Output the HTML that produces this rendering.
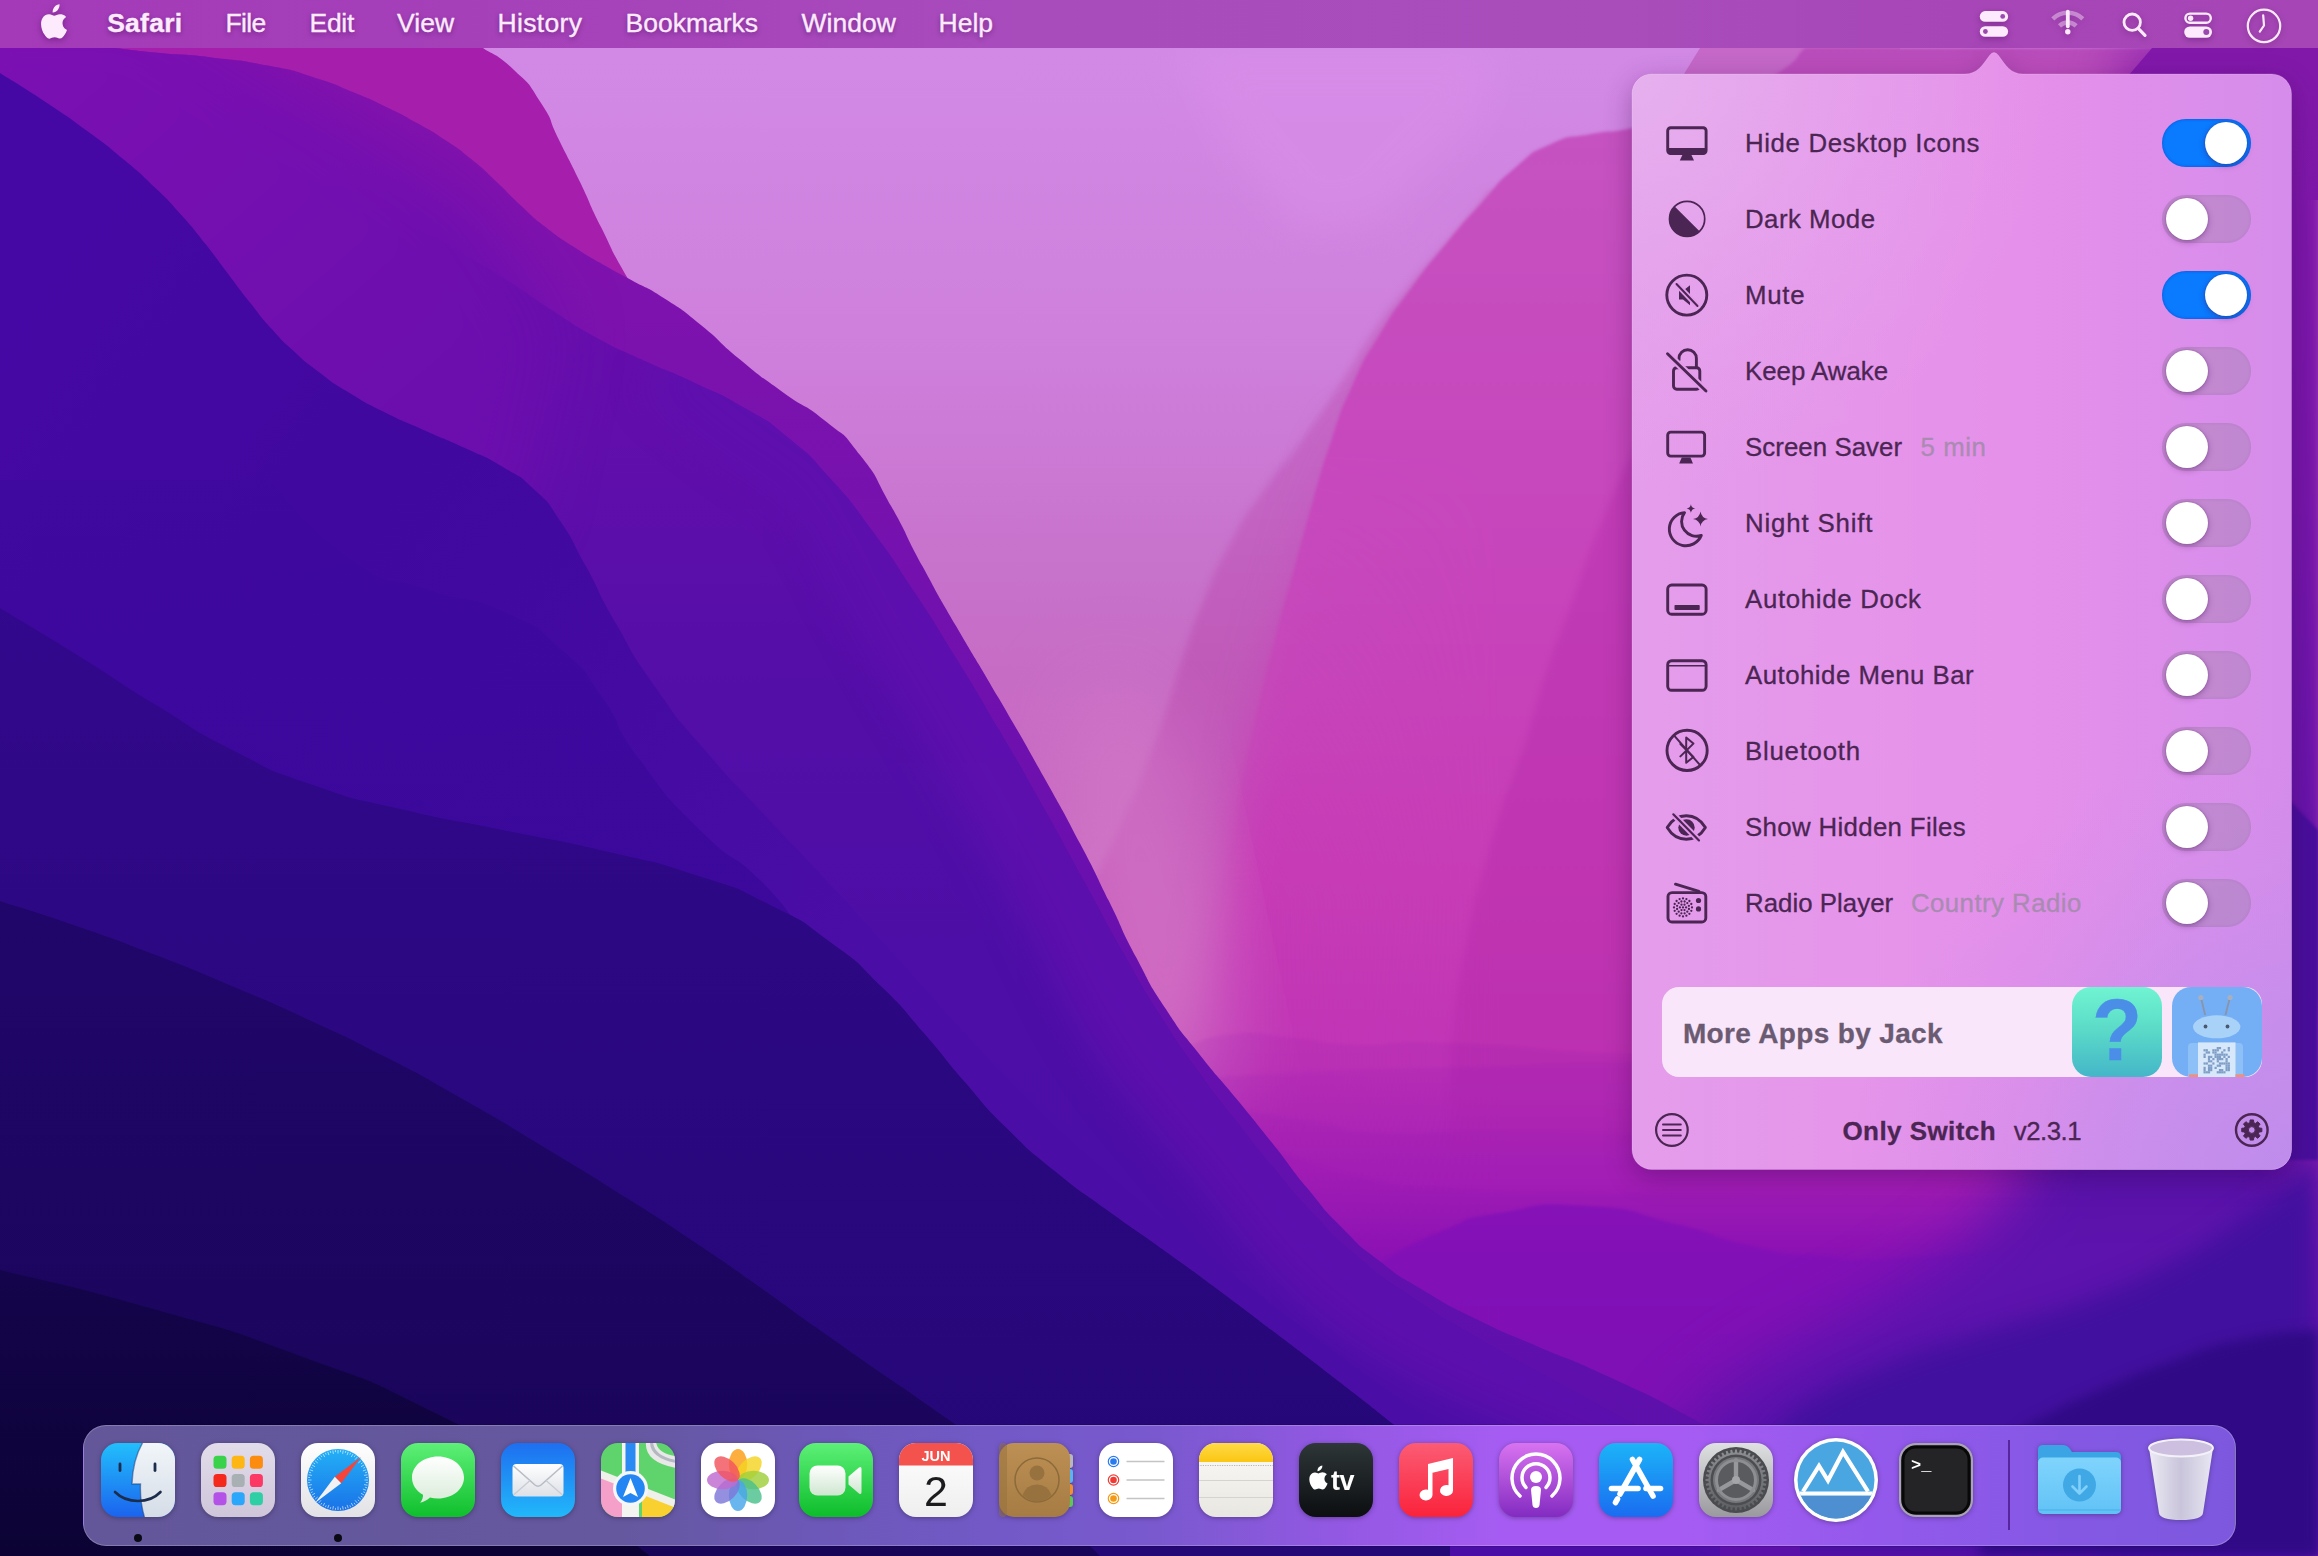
<!DOCTYPE html>
<html><head><meta charset="utf-8"><title>Desktop</title>
<style>
html,body{margin:0;padding:0;}
body{width:2318px;height:1556px;overflow:hidden;position:relative;background:#3a0a90;font-family:"Liberation Sans",sans-serif;}
</style></head><body>
<svg id="wp" width="2318" height="1556" viewBox="0 0 2318 1556" style="position:absolute;left:0;top:0">
<defs>
<linearGradient id="gSky" x1="0" y1="48" x2="0" y2="1300" gradientUnits="userSpaceOnUse"><stop offset="0" stop-color="#d289e6"/><stop offset="0.25" stop-color="#ce7fdb"/><stop offset="0.42" stop-color="#c772cb"/><stop offset="0.5" stop-color="#c76cc5"/><stop offset="0.6" stop-color="#c86ac2"/><stop offset="0.75" stop-color="#d070c4"/><stop offset="1" stop-color="#b030b4"/></linearGradient>
<linearGradient id="gPink" x1="0" y1="48" x2="0" y2="1556" gradientUnits="userSpaceOnUse"><stop offset="0" stop-color="#b84cba"/><stop offset="0.05" stop-color="#c552c0"/><stop offset="0.3" stop-color="#c746bc"/><stop offset="0.55" stop-color="#c73cb6"/><stop offset="0.68" stop-color="#c034b6"/><stop offset="0.755" stop-color="#ac22b8"/><stop offset="0.8" stop-color="#8e14b6"/><stop offset="0.85" stop-color="#7c10b2"/><stop offset="0.92" stop-color="#6a10aa"/><stop offset="1" stop-color="#560e9e"/></linearGradient>
<linearGradient id="gHaze" x1="0" y1="190" x2="0" y2="1250" gradientUnits="userSpaceOnUse"><stop offset="0" stop-color="#c970cc"/><stop offset="0.25" stop-color="#c466c5"/><stop offset="0.45" stop-color="#c05ab9"/><stop offset="0.6" stop-color="#c458ba"/><stop offset="0.75" stop-color="#ca58bc"/><stop offset="1" stop-color="#b030b4" stop-opacity="0"/></linearGradient>
<linearGradient id="gC" x1="0" y1="48" x2="0" y2="1556" gradientUnits="userSpaceOnUse"><stop offset="0" stop-color="#8412ac"/><stop offset="0.2" stop-color="#7c12ae"/><stop offset="0.5" stop-color="#6c10ae"/><stop offset="0.75" stop-color="#6210ae"/><stop offset="1" stop-color="#5c10aa"/></linearGradient>
<linearGradient id="gC2" x1="0" y1="48" x2="350" y2="450" gradientUnits="userSpaceOnUse"><stop offset="0" stop-color="#7b10b2"/><stop offset="0.5" stop-color="#740fb0"/><stop offset="1" stop-color="#6c0eae"/></linearGradient>
<linearGradient id="gD" x1="0" y1="150" x2="0" y2="1500" gradientUnits="userSpaceOnUse"><stop offset="0" stop-color="#6e0eae"/><stop offset="0.2" stop-color="#620eac"/><stop offset="0.4" stop-color="#540ea8"/><stop offset="0.6" stop-color="#4c0ea6"/><stop offset="1" stop-color="#4a0ea6"/></linearGradient>
<linearGradient id="gE" x1="0" y1="300" x2="1300" y2="1300" gradientUnits="userSpaceOnUse"><stop offset="0" stop-color="#4608a4"/><stop offset="0.25" stop-color="#40089f"/><stop offset="0.45" stop-color="#440aa1"/><stop offset="0.65" stop-color="#4a0ea6"/><stop offset="1" stop-color="#4a0ea6"/></linearGradient>
<linearGradient id="gE2" x1="0" y1="480" x2="0" y2="1000" gradientUnits="userSpaceOnUse"><stop offset="0" stop-color="#3e089e"/><stop offset="1" stop-color="#38089a"/></linearGradient>
<linearGradient id="gF" x1="0" y1="600" x2="0" y2="1556" gradientUnits="userSpaceOnUse"><stop offset="0" stop-color="#32088c"/><stop offset="0.5" stop-color="#2a0880"/><stop offset="1" stop-color="#250776"/></linearGradient>
<linearGradient id="gG" x1="0" y1="900" x2="0" y2="1556" gradientUnits="userSpaceOnUse"><stop offset="0" stop-color="#20066a"/><stop offset="1" stop-color="#190558"/></linearGradient>
<linearGradient id="gH" x1="0" y1="1270" x2="0" y2="1556" gradientUnits="userSpaceOnUse"><stop offset="0" stop-color="#14044c"/><stop offset="1" stop-color="#0c0334"/></linearGradient>
<linearGradient id="gR" x1="0" y1="48" x2="0" y2="1556" gradientUnits="userSpaceOnUse"><stop offset="0" stop-color="#8218aa"/><stop offset="0.3" stop-color="#7616aa"/><stop offset="0.5" stop-color="#6814aa"/><stop offset="0.55" stop-color="#5a12a6"/><stop offset="0.72" stop-color="#5411a6"/><stop offset="0.8" stop-color="#5e13ae"/><stop offset="0.9" stop-color="#5a12ac"/><stop offset="1" stop-color="#5210a4"/></linearGradient>
<filter color-interpolation-filters="sRGB" id="b2" x="-5%" y="-5%" width="110%" height="110%"><feGaussianBlur color-interpolation-filters="sRGB" stdDeviation="1.500"/></filter>
<filter color-interpolation-filters="sRGB" id="b4" x="-10%" y="-10%" width="120%" height="120%"><feGaussianBlur color-interpolation-filters="sRGB" stdDeviation="3.500"/></filter>
<filter color-interpolation-filters="sRGB" id="b6" x="-10%" y="-10%" width="120%" height="120%"><feGaussianBlur color-interpolation-filters="sRGB" stdDeviation="6"/></filter>
<filter color-interpolation-filters="sRGB" id="b12" x="-10%" y="-10%" width="120%" height="120%"><feGaussianBlur color-interpolation-filters="sRGB" stdDeviation="12"/></filter>
<filter color-interpolation-filters="sRGB" id="b20" x="-20%" y="-20%" width="140%" height="140%"><feGaussianBlur color-interpolation-filters="sRGB" stdDeviation="20"/></filter>
<filter color-interpolation-filters="sRGB" id="b30" x="-30%" y="-30%" width="160%" height="160%"><feGaussianBlur color-interpolation-filters="sRGB" stdDeviation="30"/></filter>
<filter color-interpolation-filters="sRGB" id="b40" x="-30%" y="-30%" width="160%" height="160%"><feGaussianBlur color-interpolation-filters="sRGB" stdDeviation="40"/></filter>
<linearGradient id="mPg" x1="0" y1="450" x2="0" y2="900" gradientUnits="userSpaceOnUse"><stop offset="0" stop-color="#fff"/><stop offset="1" stop-color="#000"/></linearGradient>
<linearGradient id="mPh" x1="1250" y1="0" x2="1500" y2="0" gradientUnits="userSpaceOnUse"><stop offset="0" stop-color="#fff" stop-opacity="0"/><stop offset="1" stop-color="#fff" stop-opacity="1"/></linearGradient>
<linearGradient id="mPbg" x1="0" y1="380" x2="0" y2="800" gradientUnits="userSpaceOnUse"><stop offset="0" stop-color="#000"/><stop offset="1" stop-color="#fff"/></linearGradient>
<mask id="mPb" maskUnits="userSpaceOnUse" x="0" y="0" width="2318" height="1556"><rect x="0" y="0" width="2318" height="1556" fill="url(#mPbg)"/></mask>
<mask id="mP" maskUnits="userSpaceOnUse" x="0" y="0" width="2318" height="1556"><rect x="0" y="0" width="2318" height="1556" fill="url(#mPg)"/><rect x="1250" y="0" width="1070" height="1556" fill="url(#mPh)"/></mask>
</defs>
<rect x="0" y="0" width="2318" height="1556" fill="url(#gSky)"/>
<path d="M1180,48 L1500,48 L1480,120 L1380,220 L1300,230 L1230,150 Z" fill="#da90ea" opacity="0.55" filter="url(#b20)"/>
<path d="M1700,48 L1684,74 L1650,130 L1900,130 L1900,48 Z" fill="#c568c8"/>
<path d="M1490.0,190.0 C1483.3,198.3 1486.2,195.4 1470.0,215.0 C1453.8,234.6 1462.1,224.6 1441.2,248.8 C1420.4,272.9 1430.0,260.0 1407.5,287.5 C1385.0,315.0 1395.8,299.6 1373.8,331.2 C1351.7,362.9 1364.6,347.1 1341.2,382.5 C1317.9,417.9 1329.6,401.7 1303.8,437.5 C1277.9,473.3 1288.3,454.6 1263.8,490.0 C1239.2,525.4 1250.0,507.1 1230.0,543.8 C1210.0,580.4 1218.8,564.2 1203.8,600.0 C1188.8,635.8 1196.7,617.1 1185.0,651.2 C1173.3,685.4 1180.8,666.2 1168.8,702.5 C1156.7,738.8 1163.8,720.8 1148.8,760.0 C1133.8,799.2 1142.1,780.0 1123.8,820.0 C1105.4,860.0 1115.0,840.0 1093.8,880.0 C1072.5,920.0 1071.2,920.0 1060.0,940.0 L1060.0,1556.0 L2318.0,1556.0 L2318.0,190.0 Z" fill="url(#gHaze)" filter="url(#b4)"/>
<g mask="url(#mPb)"><path d="M1805.0,48.0 C1793.8,57.7 1804.4,57.3 1771.2,77.0 C1738.1,96.7 1749.8,90.5 1705.5,107.0 C1661.2,123.5 1676.7,117.5 1638.5,126.5 C1600.3,135.5 1620.0,128.2 1591.0,134.0 C1562.0,139.8 1577.0,132.3 1551.5,143.8 C1526.0,155.2 1538.1,148.2 1514.5,168.2 C1490.9,188.2 1503.2,178.9 1480.8,203.8 C1458.2,228.6 1469.9,215.0 1447.0,242.8 C1424.1,270.5 1434.5,256.3 1412.0,287.0 C1389.5,317.7 1399.1,302.6 1379.5,334.8 C1359.9,366.9 1369.1,348.9 1353.2,383.5 C1337.4,418.1 1345.4,399.3 1332.0,438.5 C1318.6,477.7 1325.3,458.4 1313.0,501.0 C1300.7,543.6 1306.9,523.1 1295.0,566.2 C1283.1,609.4 1288.6,587.3 1277.2,630.5 C1265.9,673.7 1271.0,652.1 1261.0,695.8 C1251.0,739.4 1255.9,717.8 1247.2,761.5 C1238.6,805.2 1243.7,780.6 1235.0,826.8 C1226.3,872.9 1231.5,848.9 1221.2,900.0 C1211.0,951.1 1216.3,926.7 1204.2,980.0 C1192.2,1033.3 1191.4,1033.3 1185.0,1060.0 L1185.0,1556.0 L2318.0,1556.0 L2318.0,48.0 Z" fill="url(#gPink)" filter="url(#b20)"/></g>
<g mask="url(#mP)"><path d="M1805.0,48.0 C1793.8,57.7 1804.4,57.3 1771.2,77.0 C1738.1,96.7 1749.8,90.5 1705.5,107.0 C1661.2,123.5 1676.7,117.5 1638.5,126.5 C1600.3,135.5 1620.0,128.2 1591.0,134.0 C1562.0,139.8 1577.0,132.3 1551.5,143.8 C1526.0,155.2 1538.1,148.2 1514.5,168.2 C1490.9,188.2 1503.2,178.9 1480.8,203.8 C1458.2,228.6 1469.9,215.0 1447.0,242.8 C1424.1,270.5 1434.5,256.3 1412.0,287.0 C1389.5,317.7 1399.1,302.6 1379.5,334.8 C1359.9,366.9 1369.1,348.9 1353.2,383.5 C1337.4,418.1 1345.4,399.3 1332.0,438.5 C1318.6,477.7 1325.3,458.4 1313.0,501.0 C1300.7,543.6 1306.9,523.1 1295.0,566.2 C1283.1,609.4 1288.6,587.3 1277.2,630.5 C1265.9,673.7 1271.0,652.1 1261.0,695.8 C1251.0,739.4 1255.9,717.8 1247.2,761.5 C1238.6,805.2 1243.7,780.6 1235.0,826.8 C1226.3,872.9 1231.5,848.9 1221.2,900.0 C1211.0,951.1 1216.3,926.7 1204.2,980.0 C1192.2,1033.3 1191.4,1033.3 1185.0,1060.0 L1185.0,1556.0 L2318.0,1556.0 L2318.0,48.0 Z" fill="url(#gPink)" filter="url(#b2)"/></g>
<path d="M1660.0,400.0 C1643.3,434.0 1640.0,433.0 1610.0,502.0 C1580.0,571.0 1591.0,551.0 1570.0,607.0 C1549.0,663.0 1560.7,629.3 1547.0,670.0 C1533.3,710.7 1548.3,669.0 1529.0,729.0 C1509.7,789.0 1510.3,776.3 1489.0,850.0 C1467.7,923.7 1478.0,883.3 1465.0,950.0 C1452.0,1016.7 1455.0,1016.7 1450.0,1050.0 L1450.0,1150.0 L1700.0,1150.0 L1700.0,400.0 Z" fill="#b428aa" opacity="0.35" filter="url(#b4)"/>
<ellipse cx="1150" cy="900" rx="70" ry="230" fill="#d47cc8" opacity="0.55" filter="url(#b40)" transform="rotate(-12 1150 900)"/>
<path d="M1185.0,1048.0 C1201.3,1043.3 1198.3,1037.3 1234.0,1034.0 C1269.7,1030.7 1250.0,1034.3 1292.0,1038.0 C1334.0,1041.7 1307.3,1043.3 1360.0,1045.0 C1412.7,1046.7 1356.7,1040.0 1450.0,1043.0 C1543.3,1046.0 1523.3,1051.7 1640.0,1054.0 C1756.7,1056.3 1646.7,1048.0 1800.0,1050.0 C1953.3,1052.0 2000.0,1056.7 2100.0,1060.0 L2100.0,1556.0 L1185.0,1556.0 Z" fill="#8a12b4" opacity="0.10" filter="url(#b2)"/>
<path d="M1205.0,1078.0 C1241.7,1076.0 1233.3,1075.3 1315.0,1072.0 C1396.7,1068.7 1341.7,1071.3 1450.0,1068.0 C1558.3,1064.7 1523.3,1061.3 1640.0,1062.0 C1756.7,1062.7 1646.7,1064.0 1800.0,1070.0 C1953.3,1076.0 2000.0,1076.7 2100.0,1080.0 L2100.0,1556.0 L1205.0,1556.0 Z" fill="#8a12b4" opacity="0.10" filter="url(#b2)"/>
<path d="M1240.0,1110.0 C1265.0,1114.0 1267.7,1114.3 1315.0,1122.0 C1362.3,1129.7 1322.0,1130.0 1382.0,1133.0 C1442.0,1136.0 1409.0,1130.3 1495.0,1131.0 C1581.0,1131.7 1538.3,1132.0 1640.0,1135.0 C1741.7,1138.0 1646.7,1135.0 1800.0,1140.0 C1953.3,1145.0 2000.0,1146.7 2100.0,1150.0 L2100.0,1556.0 L1240.0,1556.0 Z" fill="#8a12b4" opacity="0.10" filter="url(#b2)"/>
<path d="M1275.0,1150.0 C1303.3,1158.7 1301.7,1163.0 1360.0,1176.0 C1418.3,1189.0 1356.7,1183.0 1450.0,1189.0 C1543.3,1195.0 1523.3,1191.7 1640.0,1194.0 C1756.7,1196.3 1646.7,1194.0 1800.0,1196.0 C1953.3,1198.0 2000.0,1198.7 2100.0,1200.0 L2100.0,1556.0 L1275.0,1556.0 Z" fill="#8a12b4" opacity="0.10" filter="url(#b2)"/>
<path d="M1380.0,1262.0 C1400.0,1252.0 1400.0,1248.3 1440.0,1232.0 C1480.0,1215.7 1450.7,1221.7 1500.0,1213.0 C1549.3,1204.3 1529.3,1202.3 1588.0,1206.0 C1646.7,1209.7 1623.0,1211.0 1676.0,1224.0 C1729.0,1237.0 1699.7,1234.3 1747.0,1245.0 C1794.3,1255.7 1767.0,1251.7 1818.0,1256.0 C1869.0,1260.3 1839.3,1260.0 1900.0,1258.0 C1960.7,1256.0 1966.7,1252.7 2000.0,1250.0 L2100.0,1556.0 L1380.0,1556.0 Z" fill="#8010b8" opacity="0.75" filter="url(#b2)"/>
<path d="M2152.0,48.0 C2144.3,56.7 2144.7,-10.0 2129.0,74.0 C2113.3,158.0 2123.0,91.3 2105.0,300.0 C2087.0,508.7 2098.3,433.3 2075.0,700.0 C2051.7,966.7 2052.7,943.0 2035.0,1100.0 C2017.3,1257.0 2033.3,1136.7 2022.0,1171.0 C2010.7,1205.3 2018.7,1180.7 2001.0,1203.0 C1983.3,1225.3 1995.0,1214.7 1969.0,1238.0 C1943.0,1261.3 1956.0,1250.7 1923.0,1273.0 C1890.0,1295.3 1905.0,1285.0 1870.0,1305.0 C1835.0,1325.0 1861.3,1308.0 1818.0,1333.0 C1774.7,1358.0 1786.0,1347.7 1740.0,1380.0 C1694.0,1412.3 1700.0,1413.3 1680.0,1430.0 L1680.0,1556.0 L2318.0,1556.0 L2318.0,48.0 Z" fill="url(#gR)" filter="url(#b30)"/>
<path d="M2200,48 L2200,1130 L2318,1000 L2318,48 Z" fill="url(#gR)" filter="url(#b6)"/>
<path d="M2152,48 L2128,76 L2122,200 L2318,200 L2318,48 Z" fill="url(#gR)"/>
<path d="M2318.0,1150.0 C2307.7,1161.7 2312.7,1161.7 2287.0,1185.0 C2261.3,1208.3 2280.0,1194.0 2241.0,1220.0 C2202.0,1246.0 2217.0,1238.0 2170.0,1263.0 C2123.0,1288.0 2147.0,1276.3 2100.0,1295.0 C2053.0,1313.7 2076.0,1304.0 2029.0,1319.0 C1982.0,1334.0 2006.0,1324.7 1959.0,1340.0 C1912.0,1355.3 1935.0,1346.0 1888.0,1365.0 C1841.0,1384.0 1853.3,1377.0 1818.0,1397.0 C1782.7,1417.0 1808.0,1400.7 1782.0,1425.0 C1756.0,1449.3 1754.0,1455.0 1740.0,1470.0 L1740.0,1556.0 L2318.0,1556.0 Z" fill="#42109e" filter="url(#b12)"/>
<path d="M2318.0,1330.0 C2292.3,1333.3 2290.3,1329.3 2241.0,1340.0 C2191.7,1350.7 2217.0,1345.3 2170.0,1362.0 C2123.0,1378.7 2141.0,1372.3 2100.0,1390.0 C2059.0,1407.7 2073.0,1401.7 2047.0,1415.0 C2021.0,1428.3 2044.3,1411.7 2022.0,1430.0 C1999.7,1448.3 1994.0,1456.7 1980.0,1470.0 L1980.0,1556.0 L2318.0,1556.0 Z" fill="#300a86" filter="url(#b6)"/>
<path d="M2280,790 L2318,830 L2318,1160 L2280,1160 Z" fill="#480e9c" filter="url(#b2)"/>
<path d="M483.0,48.0 C493.3,55.3 494.7,51.7 514.0,70.0 C533.3,88.3 526.0,79.7 541.0,103.0 C556.0,126.3 546.0,113.7 559.0,140.0 C572.0,166.3 566.0,153.0 580.0,182.0 C594.0,211.0 585.0,194.7 601.0,227.0 C617.0,259.3 608.3,244.7 628.0,279.0 C647.7,313.3 649.3,313.0 660.0,330.0 L660.0,500.0 L0.0,500.0 L0.0,48.0 Z" fill="#a51eac"/>
<clipPath id="clipC"><path d="M115.0,48.0 C129.0,49.6 124.9,49.6 157.0,52.8 C189.1,55.9 174.2,53.1 211.2,57.4 C248.2,61.7 233.2,58.8 268.0,65.6 C302.8,72.4 286.8,69.0 315.5,77.9 C344.2,86.9 330.2,82.7 354.0,92.5 C377.8,102.3 365.8,97.1 386.8,107.2 C407.8,117.4 397.4,112.0 417.0,123.0 C436.6,134.0 427.2,128.1 445.5,140.2 C463.8,152.4 454.7,145.6 471.8,159.5 C488.8,173.4 480.5,166.8 496.8,182.0 C513.0,197.2 504.2,190.2 520.5,205.2 C536.8,220.2 527.7,213.1 545.5,227.0 C563.3,240.9 555.0,234.6 574.0,247.0 C593.0,259.4 583.4,253.2 602.5,264.2 C621.6,275.2 610.6,268.6 631.2,280.0 C651.9,291.4 641.2,283.4 664.5,298.5 C687.8,313.6 676.1,304.9 701.2,325.2 C726.4,345.6 712.9,337.2 740.0,359.5 C767.1,381.8 754.2,371.6 782.5,392.0 C810.8,412.4 799.2,399.8 825.0,420.8 C850.8,441.8 837.9,426.5 860.0,455.0 C882.1,483.5 870.4,469.2 891.2,506.2 C912.1,543.3 900.8,526.2 922.5,566.2 C944.2,606.2 930.8,582.2 956.2,626.2 C981.7,670.2 969.7,648.2 998.8,698.2 C1027.8,748.3 1016.3,728.0 1043.5,776.5 C1070.7,825.0 1058.5,802.3 1080.2,843.8 C1102.0,885.2 1090.2,863.0 1108.8,900.8 C1127.3,938.5 1116.9,920.8 1136.0,957.0 C1155.1,993.2 1145.0,977.0 1166.0,1009.2 C1187.0,1041.5 1175.7,1024.1 1199.0,1053.8 C1222.3,1083.4 1211.3,1068.2 1236.0,1098.2 C1260.7,1128.3 1249.3,1114.2 1273.0,1144.0 C1296.7,1173.8 1284.1,1159.9 1307.0,1187.8 C1329.9,1215.6 1317.7,1203.2 1341.8,1227.5 C1365.8,1251.8 1352.2,1239.9 1379.2,1260.8 C1406.2,1281.6 1390.4,1270.6 1422.8,1290.0 C1455.1,1309.4 1438.3,1300.3 1476.2,1319.0 C1514.2,1337.7 1492.3,1326.8 1536.5,1346.0 C1580.7,1365.2 1554.2,1351.2 1608.8,1376.8 C1663.2,1402.2 1636.2,1388.1 1700.0,1422.5 C1763.8,1456.9 1766.7,1460.8 1800.0,1480.0 L1800.0,1556.0 L0.0,1556.0 L0.0,48.0 Z"/></clipPath>
<path d="M115.0,48.0 C129.0,49.6 124.9,49.6 157.0,52.8 C189.1,55.9 174.2,53.1 211.2,57.4 C248.2,61.7 233.2,58.8 268.0,65.6 C302.8,72.4 286.8,69.0 315.5,77.9 C344.2,86.9 330.2,82.7 354.0,92.5 C377.8,102.3 365.8,97.1 386.8,107.2 C407.8,117.4 397.4,112.0 417.0,123.0 C436.6,134.0 427.2,128.1 445.5,140.2 C463.8,152.4 454.7,145.6 471.8,159.5 C488.8,173.4 480.5,166.8 496.8,182.0 C513.0,197.2 504.2,190.2 520.5,205.2 C536.8,220.2 527.7,213.1 545.5,227.0 C563.3,240.9 555.0,234.6 574.0,247.0 C593.0,259.4 583.4,253.2 602.5,264.2 C621.6,275.2 610.6,268.6 631.2,280.0 C651.9,291.4 641.2,283.4 664.5,298.5 C687.8,313.6 676.1,304.9 701.2,325.2 C726.4,345.6 712.9,337.2 740.0,359.5 C767.1,381.8 754.2,371.6 782.5,392.0 C810.8,412.4 799.2,399.8 825.0,420.8 C850.8,441.8 837.9,426.5 860.0,455.0 C882.1,483.5 870.4,469.2 891.2,506.2 C912.1,543.3 900.8,526.2 922.5,566.2 C944.2,606.2 930.8,582.2 956.2,626.2 C981.7,670.2 969.7,648.2 998.8,698.2 C1027.8,748.3 1016.3,728.0 1043.5,776.5 C1070.7,825.0 1058.5,802.3 1080.2,843.8 C1102.0,885.2 1090.2,863.0 1108.8,900.8 C1127.3,938.5 1116.9,920.8 1136.0,957.0 C1155.1,993.2 1145.0,977.0 1166.0,1009.2 C1187.0,1041.5 1175.7,1024.1 1199.0,1053.8 C1222.3,1083.4 1211.3,1068.2 1236.0,1098.2 C1260.7,1128.3 1249.3,1114.2 1273.0,1144.0 C1296.7,1173.8 1284.1,1159.9 1307.0,1187.8 C1329.9,1215.6 1317.7,1203.2 1341.8,1227.5 C1365.8,1251.8 1352.2,1239.9 1379.2,1260.8 C1406.2,1281.6 1390.4,1270.6 1422.8,1290.0 C1455.1,1309.4 1438.3,1300.3 1476.2,1319.0 C1514.2,1337.7 1492.3,1326.8 1536.5,1346.0 C1580.7,1365.2 1554.2,1351.2 1608.8,1376.8 C1663.2,1402.2 1636.2,1388.1 1700.0,1422.5 C1763.8,1456.9 1766.7,1460.8 1800.0,1480.0 L1800.0,1556.0 L0.0,1556.0 L0.0,48.0 Z" fill="url(#gC)"/>
<clipPath id="clipD"><path d="M0.0,50.0 C33.3,62.6 33.9,62.1 100.0,87.9 C166.1,113.8 135.5,101.4 198.4,127.6 C261.4,153.7 234.0,141.9 288.9,166.4 C343.9,190.8 319.3,179.5 363.3,201.0 C407.3,222.4 385.7,211.8 421.0,230.8 C456.3,249.7 438.4,239.7 469.2,257.7 C500.1,275.6 485.1,266.6 513.5,284.6 C541.9,302.7 527.3,294.4 554.4,311.8 C581.6,329.2 565.9,320.8 595.0,336.8 C624.1,352.7 608.6,344.2 641.8,359.6 C675.0,375.0 660.2,366.6 694.7,382.9 C729.2,399.1 713.7,389.7 745.2,408.3 C776.8,426.9 761.0,415.3 789.4,438.7 C817.7,462.1 802.9,448.0 830.3,478.4 C857.7,508.9 843.8,492.4 871.6,530.0 C899.4,567.6 885.5,548.4 913.8,591.2 C942.0,634.1 927.9,612.4 956.2,658.4 C984.6,704.5 970.4,681.0 998.8,729.4 C1027.1,777.7 1013.1,753.4 1041.2,803.4 C1069.4,853.4 1055.9,829.9 1083.1,879.4 C1110.3,928.9 1097.2,906.7 1122.8,951.9 C1148.4,997.1 1135.3,975.8 1160.0,1015.0 C1184.7,1054.2 1171.9,1034.5 1196.9,1069.4 C1221.9,1104.3 1209.5,1086.9 1235.0,1119.7 C1260.5,1152.5 1247.7,1136.8 1273.4,1167.8 C1299.2,1198.9 1284.9,1183.9 1312.2,1212.8 C1339.5,1241.8 1322.9,1227.1 1355.3,1254.7 C1387.7,1282.3 1368.2,1267.7 1409.4,1295.6 C1450.5,1323.6 1428.5,1309.1 1478.8,1338.6 C1529.0,1368.0 1505.4,1354.0 1560.0,1383.9 C1614.6,1413.9 1589.2,1399.8 1642.5,1428.4 C1695.8,1457.1 1694.2,1456.1 1720.0,1470.0 L1720.0,1556.0 L0.0,1556.0 Z"/></clipPath>
<path d="M0.0,50.0 C33.3,62.6 33.9,62.1 100.0,87.9 C166.1,113.8 135.5,101.4 198.4,127.6 C261.4,153.7 234.0,141.9 288.9,166.4 C343.9,190.8 319.3,179.5 363.3,201.0 C407.3,222.4 385.7,211.8 421.0,230.8 C456.3,249.7 438.4,239.7 469.2,257.7 C500.1,275.6 485.1,266.6 513.5,284.6 C541.9,302.7 527.3,294.4 554.4,311.8 C581.6,329.2 565.9,320.8 595.0,336.8 C624.1,352.7 608.6,344.2 641.8,359.6 C675.0,375.0 660.2,366.6 694.7,382.9 C729.2,399.1 713.7,389.7 745.2,408.3 C776.8,426.9 761.0,415.3 789.4,438.7 C817.7,462.1 802.9,448.0 830.3,478.4 C857.7,508.9 843.8,492.4 871.6,530.0 C899.4,567.6 885.5,548.4 913.8,591.2 C942.0,634.1 927.9,612.4 956.2,658.4 C984.6,704.5 970.4,681.0 998.8,729.4 C1027.1,777.7 1013.1,753.4 1041.2,803.4 C1069.4,853.4 1055.9,829.9 1083.1,879.4 C1110.3,928.9 1097.2,906.7 1122.8,951.9 C1148.4,997.1 1135.3,975.8 1160.0,1015.0 C1184.7,1054.2 1171.9,1034.5 1196.9,1069.4 C1221.9,1104.3 1209.5,1086.9 1235.0,1119.7 C1260.5,1152.5 1247.7,1136.8 1273.4,1167.8 C1299.2,1198.9 1284.9,1183.9 1312.2,1212.8 C1339.5,1241.8 1322.9,1227.1 1355.3,1254.7 C1387.7,1282.3 1368.2,1267.7 1409.4,1295.6 C1450.5,1323.6 1428.5,1309.1 1478.8,1338.6 C1529.0,1368.0 1505.4,1354.0 1560.0,1383.9 C1614.6,1413.9 1589.2,1399.8 1642.5,1428.4 C1695.8,1457.1 1694.2,1456.1 1720.0,1470.0 L1720.0,1556.0 L0.0,1556.0 Z" fill="url(#gD)"/>
<g clip-path="url(#clipD)"><path d="M701.2,325.2 C714.2,336.7 712.9,337.2 740.0,359.5 C767.1,381.8 754.2,371.6 782.5,392.0 C810.8,412.4 799.2,399.8 825.0,420.8 C850.8,441.8 837.9,426.5 860.0,455.0 C882.1,483.5 870.4,469.2 891.2,506.2 C912.1,543.3 900.8,526.2 922.5,566.2 C944.2,606.2 930.8,582.2 956.2,626.2 C981.7,670.2 969.7,648.2 998.8,698.2 C1027.8,748.3 1016.3,728.0 1043.5,776.5 C1070.7,825.0 1058.5,802.3 1080.2,843.8 C1102.0,885.2 1090.2,863.0 1108.8,900.8 C1127.3,938.5 1116.9,920.8 1136.0,957.0 C1155.1,993.2 1145.0,977.0 1166.0,1009.2 C1187.0,1041.5 1175.7,1024.1 1199.0,1053.8 C1222.3,1083.4 1211.3,1068.2 1236.0,1098.2 C1260.7,1128.3 1249.3,1114.2 1273.0,1144.0 C1296.7,1173.8 1284.1,1159.9 1307.0,1187.8 C1329.9,1215.6 1317.7,1203.2 1341.8,1227.5 C1365.8,1251.8 1352.2,1239.9 1379.2,1260.8 C1406.2,1281.6 1390.4,1270.6 1422.8,1290.0 C1455.1,1309.4 1438.3,1300.3 1476.2,1319.0 C1514.2,1337.7 1492.3,1326.8 1536.5,1346.0 C1580.7,1365.2 1554.2,1351.2 1608.8,1376.8 C1663.2,1402.2 1636.2,1388.1 1700.0,1422.5 C1763.8,1456.9 1766.7,1460.8 1800.0,1480.0" fill="none" stroke="#5e10ae" stroke-width="170" opacity="0.9" filter="url(#b20)"/></g>
<g clip-path="url(#clipC)"><path d="M-60,0 L150,0 L330,110 L470,200 L560,330 L520,520 L-60,520 Z" fill="url(#gC2)" filter="url(#b30)"/></g>
<path d="M0.0,73.0 C14.9,82.5 15.8,82.2 44.8,101.4 C73.7,120.7 60.6,111.3 86.9,130.7 C113.3,150.1 101.3,140.8 123.8,159.6 C146.2,178.4 135.4,168.8 154.4,187.1 C173.4,205.3 163.8,195.5 180.7,214.3 C197.6,233.2 189.2,223.6 205.1,243.6 C221.1,263.6 213.4,254.5 228.6,274.4 C243.7,294.3 236.3,285.3 250.6,303.3 C264.9,321.4 257.2,312.7 271.4,328.5 C285.7,344.3 277.6,336.4 293.4,350.8 C309.1,365.3 300.4,358.1 318.8,371.9 C337.1,385.7 326.9,379.0 348.4,392.2 C370.0,405.4 358.3,398.9 383.3,411.5 C408.4,424.1 396.2,417.7 423.6,429.9 C451.0,442.2 438.9,435.8 465.5,448.2 C492.1,460.6 480.4,453.4 503.4,467.2 C526.3,481.1 515.4,471.8 534.3,489.6 C553.3,507.5 543.1,495.4 560.2,520.9 C577.4,546.4 567.2,531.8 585.9,566.1 C604.5,600.4 593.0,583.5 616.2,623.8 C639.3,664.0 625.7,644.8 655.3,686.9 C684.9,729.0 668.6,707.5 705.0,750.0 C741.4,792.5 722.7,769.8 764.4,814.4 C806.0,859.0 786.0,836.4 830.0,883.8 C874.0,931.1 852.9,908.6 896.2,956.6 C939.6,1004.5 917.5,981.6 960.0,1027.5 C1002.5,1073.4 980.0,1050.8 1023.8,1094.4 C1067.5,1137.9 1044.4,1116.1 1091.2,1158.1 C1138.1,1200.1 1113.3,1178.6 1164.4,1220.3 C1215.4,1262.0 1189.6,1241.1 1244.4,1283.1 C1299.2,1325.1 1274.0,1305.4 1328.8,1346.2 C1383.5,1387.1 1358.3,1367.7 1408.8,1405.6 C1459.2,1443.5 1456.2,1441.9 1480.0,1460.0 L1480.0,1556.0 L0.0,1556.0 Z" fill="url(#gE)"/>
<path d="M270.0,480.0 C296.7,506.0 297.7,521.7 350.0,558.0 C402.3,594.3 375.3,571.0 427.0,589.0 C478.7,607.0 459.7,591.3 505.0,612.0 C550.3,632.7 530.7,622.7 563.0,651.0 C595.3,679.3 576.3,660.7 602.0,697.0 C627.7,733.3 607.3,715.7 640.0,760.0 C672.7,804.3 660.0,790.0 700.0,830.0 C740.0,870.0 726.7,846.7 760.0,880.0 C793.3,913.3 786.7,913.3 800.0,930.0 L800.0,1100.0 L0.0,1100.0 L0.0,480.0 Z" fill="url(#gE2)" opacity="0.8"/>
<path d="M0.0,608.0 C25.9,623.7 25.9,623.0 77.7,655.2 C129.5,687.4 103.5,672.9 155.3,704.6 C207.1,736.3 180.4,723.5 233.0,750.3 C285.6,777.1 256.5,765.2 313.1,785.0 C369.8,804.8 339.0,794.4 402.9,809.6 C466.8,824.7 436.8,816.5 504.8,830.4 C572.7,844.4 543.1,836.6 606.8,851.5 C670.4,866.4 641.4,857.3 695.7,875.0 C750.0,892.7 724.6,882.2 769.7,904.7 C814.8,927.2 793.8,915.2 831.0,942.5 C868.2,969.8 850.3,956.1 881.4,986.4 C912.5,1016.8 896.6,1001.9 924.3,1033.6 C952.0,1065.2 937.1,1050.1 964.4,1081.5 C991.8,1112.9 976.5,1098.0 1006.4,1127.7 C1036.4,1157.4 1020.2,1142.8 1054.2,1170.6 C1088.2,1198.4 1071.2,1184.0 1108.4,1211.1 C1145.7,1238.1 1127.4,1224.0 1165.9,1251.7 C1204.5,1279.4 1185.4,1265.5 1224.1,1294.2 C1262.7,1322.9 1243.8,1308.9 1281.8,1337.8 C1319.9,1366.7 1300.9,1352.0 1338.2,1380.9 C1375.6,1409.8 1356.6,1394.8 1393.8,1424.5 C1431.1,1454.2 1431.3,1454.8 1450.0,1470.0 L1450.0,1556.0 L0.0,1556.0 Z" fill="url(#gF)"/>
<path d="M0.0,901.0 C25.9,909.5 25.9,908.4 77.7,926.4 C129.5,944.3 103.5,934.8 155.3,954.8 C207.1,974.9 181.5,964.7 233.0,986.5 C284.5,1008.3 259.1,996.9 309.7,1020.2 C360.2,1043.6 333.7,1030.3 384.7,1056.6 C435.7,1082.8 408.7,1068.4 462.7,1099.1 C516.7,1129.8 491.6,1115.4 546.8,1148.7 C601.9,1181.9 577.8,1167.1 628.0,1198.8 C678.2,1230.5 654.1,1214.9 697.4,1243.9 C740.7,1272.9 718.3,1257.9 757.9,1285.8 C797.6,1313.7 778.0,1300.4 816.3,1327.6 C854.7,1354.8 836.4,1341.9 873.0,1367.4 C909.6,1392.8 890.4,1378.2 926.2,1403.9 C962.1,1429.6 942.8,1413.6 980.7,1444.5 C1018.6,1475.4 1000.2,1459.4 1039.9,1496.6 C1079.7,1533.7 1080.0,1536.2 1100.0,1556.0 L0.0,1556.0 Z" fill="url(#gG)"/>
<path d="M0.0,1270.0 C50.0,1282.7 50.8,1279.8 150.0,1308.1 C249.2,1336.5 202.9,1320.3 297.5,1355.0 C392.1,1389.7 349.6,1370.7 433.8,1412.2 C517.9,1453.8 477.9,1431.8 550.0,1479.8 C622.1,1527.7 616.7,1530.6 650.0,1556.0 L0.0,1556.0 Z" fill="url(#gH)"/>
</svg>
<style>
#mb{position:absolute;left:0;top:0;width:2318px;height:48px;background:linear-gradient(90deg,#a43ab8 0%,#a540b9 20%,#a84cbc 45%,#a94dbb 70%,#a746b7 85%,#a646b6 100%);}
#mb span{position:absolute;top:-0.900px;-webkit-text-stroke:0.350px #fdeafd;line-height:48px;height:48px;font-size:26.5px;color:#fdeafd;white-space:nowrap;text-shadow:0 2px 5px rgba(60,0,80,0.45);}
#mb span.b{font-weight:bold;}
</style>
<div id="mb">
<svg style="position:absolute;left:36.500px;top:3.200px;filter:drop-shadow(0 2px 3px rgba(60,0,80,0.4))" width="33.300" height="40" viewBox="0 0 30 36"><path fill="#fdeafd" d="M20.3,1.2 C20.5,3.1 19.8,4.9 18.7,6.2 C17.6,7.6 15.8,8.6 14.1,8.5 C13.9,6.7 14.7,4.8 15.7,3.6 C16.9,2.2 18.8,1.3 20.3,1.2 Z M26.3,12.6 C26,12.8 23.0,14.5 23.0,18.3 C23.1,22.8 26.9,24.3 27,24.3 C26.9,24.4 26.4,26.4 25.0,28.4 C23.8,30.2 22.6,32.0 20.6,32.0 C18.7,32.1 18.1,30.9 15.9,30.9 C13.7,30.9 13.0,32.0 11.2,32.1 C9.3,32.2 7.9,30.2 6.7,28.4 C4.2,24.8 2.3,18.2 4.9,13.8 C6.1,11.6 8.4,10.2 10.8,10.2 C12.7,10.1 14.4,11.4 15.6,11.4 C16.7,11.4 18.8,9.9 21.1,10.1 C22.0,10.1 24.7,10.5 26.3,12.6 Z"/></svg>
<span class="b" style="left:107.20px;letter-spacing:0.250px">Safari</span>
<span class="" style="left:225.50px;letter-spacing:-0.650px">File</span>
<span class="" style="left:309.60px;letter-spacing:-0.317px">Edit</span>
<span class="" style="left:397.00px;letter-spacing:0.100px">View</span>
<span class="" style="left:497.50px;letter-spacing:0.333px">History</span>
<span class="" style="left:625.50px;letter-spacing:0.000px">Bookmarks</span>
<span class="" style="left:801.50px;letter-spacing:0.050px">Window</span>
<span class="" style="left:938.50px;letter-spacing:0.000px">Help</span>
<svg style="position:absolute;left:1960px;top:0;filter:drop-shadow(0 2px 3px rgba(60,0,80,0.35))" width="358" height="48" viewBox="1960 0 358 48">
<g fill="#fdeafd">
<rect x="1979.8" y="11.1" width="28.3" height="10.6" rx="5.3"/><rect x="1979.8" y="26.2" width="28.3" height="10.6" rx="5.3"/>
</g>
<circle cx="2002.7" cy="16.4" r="2.4" fill="#9a4aae"/><circle cx="1985.4" cy="31.5" r="2.4" fill="#9a4aae"/>
<g fill="none" stroke="#fdeafd" stroke-linecap="round" opacity="0.42">
<path d="M2052.8,18.8 A21.5,21.5 0 0 1 2082.8,18.8" stroke-width="4.400" stroke-linecap="butt"/>
<path d="M2059.5,25.8 A12,12 0 0 1 2076.1,25.8" stroke-width="4.400" stroke-linecap="butt"/>
</g>
<rect x="2065.900" y="9.800" width="3.800" height="18.400" rx="1.900" fill="#fdeafd"/><circle cx="2067.8" cy="31.8" r="2.700" fill="#fdeafd"/>
<circle cx="2132.2" cy="22.2" r="8.2" fill="none" stroke="#fdeafd" stroke-width="2.8"/>
<path d="M2138.2,28.4 L2145,35.4" stroke="#fdeafd" stroke-width="3.2" stroke-linecap="round"/>
<rect x="2185.4" y="13.6" width="25.4" height="9.2" rx="4.6" fill="none" stroke="#fdeafd" stroke-width="2.4"/>
<circle cx="2190.6" cy="18.2" r="2.7" fill="#fdeafd"/>
<rect x="2184.2" y="26.4" width="27.8" height="11.4" rx="5.7" fill="#fdeafd"/>
<circle cx="2206.3" cy="32.1" r="3" fill="#9a4aae"/>
<circle cx="2264" cy="25.9" r="16.2" fill="none" stroke="#fdeafd" stroke-width="2.200"/>
<path d="M2263.2,15.3 L2264,25.5 L2259.8,31.6" fill="none" stroke="#fdeafd" stroke-width="2.200" stroke-linecap="round" stroke-linejoin="round"/>
</svg>
</div>
<style>
#pop{position:absolute;left:0;top:0;width:2318px;height:1556px;pointer-events:none}
#pop .t{position:absolute;-webkit-text-stroke:0.300px currentColor;font-size:25.8px;line-height:30px;height:30px;white-space:nowrap;color:#4b2553}
#pop .t.sec{color:#a98bb2}
.tg{position:absolute;left:2161.5px;width:89px;height:48px;border-radius:24px;background:rgba(100,120,105,0.2);box-shadow:inset 0 0 3px rgba(80,30,100,0.12)}
.tg i{position:absolute;left:4px;top:3px;width:42px;height:42px;border-radius:21px;background:#fff;box-shadow:0 2px 6px rgba(60,10,80,0.35),0 0 2px rgba(60,10,80,0.3)}
.tg.on{background:#0a7aff;box-shadow:inset 0 0 3px rgba(0,40,160,0.5)}
.tg.on i{left:43px}
</style>
<div id="pop">
<svg style="position:absolute;left:0;top:0;overflow:visible" width="2318" height="1556" viewBox="0 0 2318 1556">
<defs>
<linearGradient id="pg" x1="1632" y1="0" x2="2292" y2="0" gradientUnits="userSpaceOnUse">
<stop offset="0" stop-color="#e49deb"/><stop offset="0.3" stop-color="#e596ea"/><stop offset="0.6" stop-color="#e590ea"/><stop offset="0.85" stop-color="#db8eeb"/><stop offset="1" stop-color="#d58cea"/>
</linearGradient>
<radialGradient id="pg2" cx="2310" cy="1200" r="470" gradientUnits="userSpaceOnUse">
<stop offset="0" stop-color="#bc8cec" stop-opacity="1"/><stop offset="0.45" stop-color="#c48eec" stop-opacity="0.7"/><stop offset="1" stop-color="#d48cea" stop-opacity="0"/>
</radialGradient>
<radialGradient id="pg3" cx="1632" cy="74" r="420" gradientUnits="userSpaceOnUse">
<stop offset="0" stop-color="#e6b0ee" stop-opacity="1"/><stop offset="1" stop-color="#e6a4ec" stop-opacity="0"/>
</radialGradient>
<filter id="psh" x="-10%" y="-10%" width="120%" height="120%"><feGaussianBlur stdDeviation="14"/></filter>
<clipPath id="pclip"><path d="M1652,74 H1965 C1977,74 1982,66 1989.500,55.500 Q1994,49.500 1998.500,55.500 C2006,66 2011,74 2023,74 H2271.500 A20,20 0 0 1 2291.500,94 V1149.500 A20,20 0 0 1 2271.500,1169.500 H1652 A20,20 0 0 1 1632,1149.500 V94 A20,20 0 0 1 1652,74 Z"/></clipPath>
</defs>
<path d="M1652,74 H1965 C1977,74 1982,66 1989.500,55.500 Q1994,49.500 1998.500,55.500 C2006,66 2011,74 2023,74 H2271.500 A20,20 0 0 1 2291.500,94 V1149.500 A20,20 0 0 1 2271.500,1169.500 H1652 A20,20 0 0 1 1632,1149.500 V94 A20,20 0 0 1 1652,74 Z" fill="#30004a" opacity="0.35" filter="url(#psh)" transform="translate(0,8)"/>
<path d="M1652,74 H1965 C1977,74 1982,66 1989.500,55.500 Q1994,49.500 1998.500,55.500 C2006,66 2011,74 2023,74 H2271.500 A20,20 0 0 1 2291.500,94 V1149.500 A20,20 0 0 1 2271.500,1169.500 H1652 A20,20 0 0 1 1632,1149.500 V94 A20,20 0 0 1 1652,74 Z" fill="url(#pg)"/>
<g clip-path="url(#pclip)"><rect x="1632" y="40" width="660" height="1130" fill="url(#pg2)"/><rect x="1632" y="40" width="660" height="1130" fill="url(#pg3)"/></g>
<path d="M1652,74 H1965 C1977,74 1982,66 1989.500,55.500 Q1994,49.500 1998.500,55.500 C2006,66 2011,74 2023,74 H2271.500 A20,20 0 0 1 2291.500,94 V1149.500 A20,20 0 0 1 2271.500,1169.500 H1652 A20,20 0 0 1 1632,1149.500 V94 A20,20 0 0 1 1652,74 Z" fill="none" stroke="rgba(255,255,255,0.18)" stroke-width="1"/>

<rect x="1667.7" y="127.7" width="38.4" height="25.8" rx="3" fill="none" stroke="#4b2553" stroke-width="2.9" stroke-linecap="round" stroke-linejoin="round"/>
<path d="M1667.7,148 h38.4 v3.5 a2.5,2.5 0 0 1 -2.5,2.5 h-33.4 a2.5,2.5 0 0 1 -2.5,-2.5 z" fill="#4b2553"/>
<path d="M1682.6,154.5 h8.6 l2.8,6 h-14.2 z" fill="#4b2553"/>
<circle cx="1687.1" cy="218.9" r="17.6" fill="none" stroke="#4b2553" stroke-width="1.7"/>
<path d="M1674.65,206.45 A17.6,17.6 0 0 0 1699.55,231.35 Z" fill="#4b2553"/>
<circle cx="1686.8" cy="295.1" r="20" fill="none" stroke="#4b2553" stroke-width="2.9" stroke-linecap="round" stroke-linejoin="round"/>
<path d="M1679,290.8 h4 l7,-5.6 v20 l-7,-5.6 h-4 z" fill="#4b2553"/>
<path d="M1676.5,284 L1697.5,306" stroke="#e59aea" stroke-width="5.5" fill="none"/>
<path d="M1676.5,284 L1697.5,306" stroke="#4b2553" stroke-width="2" stroke-linecap="round" fill="none"/>
<rect x="1673.5" y="367.7" width="26.3" height="21.5" rx="3.2" fill="none" stroke="#4b2553" stroke-width="2.9" stroke-linecap="round" stroke-linejoin="round"/>
<path d="M1679,360 v-1.5 a8.7,8.7 0 0 1 17.4,0 v9" fill="none" stroke="#4b2553" stroke-width="2.9" stroke-linecap="round" stroke-linejoin="round"/>
<path d="M1667.5,353.8 L1706,391" stroke="#e59aea" stroke-width="7" fill="none"/>
<path d="M1667.5,353.8 L1706,391" fill="none" stroke="#4b2553" stroke-width="2.9" stroke-linecap="round" stroke-linejoin="round"/>
<rect x="1667.7" y="432.1" width="36.9" height="24" rx="3" fill="none" stroke="#4b2553" stroke-width="2.9" stroke-linecap="round" stroke-linejoin="round"/>
<path d="M1681.8,457.4 h8.6 l2.6,6.2 h-13.8 z" fill="#4b2553"/>
<path d="M1684.5,512.6 A16.6,16.6 0 1 0 1701.3,535.4 A14.8,14.8 0 0 1 1684.5,512.6 Z" fill="none" stroke="#4b2553" stroke-width="2.9" stroke-linecap="round" stroke-linejoin="round"/>
<path d="M1690.9,504.2 q0.6,3.7 4.3,4.3 q-3.7,0.6 -4.3,4.3 q-0.6,-3.7 -4.3,-4.3 q3.7,-0.6 4.3,-4.3 z" fill="#4b2553"/>
<path d="M1700.5,511.6 q1,6.5 7.5,7.5 q-6.5,1 -7.5,7.5 q-1,-6.5 -7.5,-7.5 q6.500,-1 7.5,-7.5 z" fill="#4b2553"/>
<rect x="1667.7" y="585" width="38.4" height="29.2" rx="4" fill="none" stroke="#4b2553" stroke-width="2.9" stroke-linecap="round" stroke-linejoin="round"/>
<rect x="1674.5" y="604.9" width="25.2" height="5.2" rx="0.8" fill="#4b2553"/>
<rect x="1667.7" y="660.7" width="38.4" height="29.6" rx="4" fill="none" stroke="#4b2553" stroke-width="2.9" stroke-linecap="round" stroke-linejoin="round"/>
<path d="M1667.7,665.8 h38.4" stroke="#4b2553" stroke-width="1.6" fill="none"/>
<circle cx="1687.1" cy="750.4" r="20.1" fill="none" stroke="#4b2553" stroke-width="2.9" stroke-linecap="round" stroke-linejoin="round"/>
<path d="M1680.4,744 L1693.4,757 L1686.2,762.8 V737.6 L1693.4,743.6 L1680.4,756.4" fill="none" stroke="#4b2553" stroke-width="2" stroke-linecap="round" stroke-linejoin="round"/>
<path d="M1674.2,735.6 L1699.9,764.9" stroke="#4b2553" stroke-width="2" stroke-linecap="round" fill="none"/>
<path d="M1667.2,827.5 C1672,819.5 1679,815.8 1686.3,815.8 C1693.6,815.8 1700.6,819.5 1705.4,827.5 C1700.6,835.5 1693.6,839.2 1686.3,839.2 C1679,839.2 1672,835.5 1667.2,827.5 Z" fill="none" stroke="#4b2553" stroke-width="2.9" stroke-linecap="round" stroke-linejoin="round"/>
<circle cx="1686.5" cy="827.5" r="8.2" fill="#4b2553"/>
<path d="M1673.3,814.3 L1699,840.4" stroke="#e494ea" stroke-width="6" fill="none"/>
<path d="M1673.3,814.3 L1699,840.4" stroke="#4b2553" stroke-width="2.2" stroke-linecap="round" fill="none"/>
<rect x="1668" y="892.6" width="37.8" height="29.4" rx="4" fill="none" stroke="#4b2553" stroke-width="2.9" stroke-linecap="round" stroke-linejoin="round"/>
<path d="M1675.5,884.2 L1699,891.4" fill="none" stroke="#4b2553" stroke-width="2.9" stroke-linecap="round" stroke-linejoin="round"/>
<g fill="#4b2553"><circle cx="1683.0" cy="907.4" r="1.15"/><circle cx="1686.1" cy="907.4" r="1.15"/><circle cx="1684.5" cy="910.1" r="1.15"/><circle cx="1681.5" cy="910.1" r="1.15"/><circle cx="1679.9" cy="907.4" r="1.15"/><circle cx="1681.5" cy="904.7" r="1.15"/><circle cx="1684.5" cy="904.7" r="1.15"/><circle cx="1688.9" cy="909.0" r="1.15"/><circle cx="1687.3" cy="911.7" r="1.15"/><circle cx="1684.6" cy="913.3" r="1.15"/><circle cx="1681.4" cy="913.3" r="1.15"/><circle cx="1678.7" cy="911.7" r="1.15"/><circle cx="1677.1" cy="909.0" r="1.15"/><circle cx="1677.1" cy="905.8" r="1.15"/><circle cx="1678.7" cy="903.1" r="1.15"/><circle cx="1681.4" cy="901.5" r="1.15"/><circle cx="1684.6" cy="901.5" r="1.15"/><circle cx="1687.3" cy="903.1" r="1.15"/><circle cx="1688.9" cy="905.8" r="1.15"/><circle cx="1692.0" cy="907.4" r="1.15"/><circle cx="1691.3" cy="910.8" r="1.15"/><circle cx="1689.4" cy="913.8" r="1.15"/><circle cx="1686.4" cy="915.7" r="1.15"/><circle cx="1683.0" cy="916.4" r="1.15"/><circle cx="1679.6" cy="915.7" r="1.15"/><circle cx="1676.6" cy="913.8" r="1.15"/><circle cx="1674.7" cy="910.8" r="1.15"/><circle cx="1674.0" cy="907.4" r="1.15"/><circle cx="1674.7" cy="904.0" r="1.15"/><circle cx="1676.6" cy="901.0" r="1.15"/><circle cx="1679.6" cy="899.1" r="1.15"/><circle cx="1683.0" cy="898.4" r="1.15"/><circle cx="1686.4" cy="899.1" r="1.15"/><circle cx="1689.4" cy="901.0" r="1.15"/><circle cx="1691.3" cy="904.0" r="1.15"/><circle cx="1698.5" cy="900.5" r="2.6"/><circle cx="1698.5" cy="908.9" r="2.6"/></g>
<circle cx="1671.9" cy="1130" r="15.8" fill="none" stroke="#4b2553" stroke-width="2.2"/>
<path d="M1663,1124.6 h17.800 M1663,1130 h17.800 M1663,1135.4 h17.800" stroke="#4b2553" stroke-width="2" stroke-linecap="round" fill="none"/>
<circle cx="2251.8" cy="1130" r="15.8" fill="none" stroke="#4b2553" stroke-width="2.4"/>
<path d="M2259.14,1128.05 L2261.85,1128.27 L2261.85,1131.73 L2259.14,1131.95 L2258.37,1133.81 L2260.13,1135.89 L2257.69,1138.33 L2255.61,1136.57 L2253.75,1137.34 L2253.53,1140.05 L2250.07,1140.05 L2249.85,1137.34 L2247.99,1136.57 L2245.91,1138.33 L2243.47,1135.89 L2245.23,1133.81 L2244.46,1131.95 L2241.75,1131.73 L2241.75,1128.27 L2244.46,1128.05 L2245.23,1126.19 L2243.47,1124.11 L2245.91,1121.67 L2247.99,1123.43 L2249.85,1122.66 L2250.07,1119.95 L2253.53,1119.95 L2253.75,1122.66 L2255.61,1123.43 L2257.69,1121.67 L2260.13,1124.11 L2258.37,1126.19 Z M2255.2000000000003,1130 a3.4,3.4 0 1 0 -6.8,0 a3.4,3.4 0 1 0 6.8,0 Z" fill="#4b2553" fill-rule="evenodd" stroke="#4b2553" stroke-width="1" stroke-linejoin="round"/>
</svg>
<div class="t" style="left:1745.00px;top:127.9px;letter-spacing:0.632px">Hide Desktop Icons</div>
<div class="tg on" style="top:119px"><i></i></div>
<div class="t" style="left:1745.00px;top:203.9px;letter-spacing:0.481px">Dark Mode</div>
<div class="tg" style="top:195px"><i></i></div>
<div class="t" style="left:1745.00px;top:279.9px;letter-spacing:0.750px">Mute</div>
<div class="tg on" style="top:271px"><i></i></div>
<div class="t" style="left:1745.00px;top:355.9px;letter-spacing:0.011px">Keep Awake</div>
<div class="tg" style="top:347px"><i></i></div>
<div class="t" style="left:1745.00px;top:431.9px;letter-spacing:0.068px">Screen Saver</div>
<div class="t sec" style="left:1920.60px;top:431.9px;letter-spacing:0.525px">5 min</div>
<div class="tg" style="top:423px"><i></i></div>
<div class="t" style="left:1745.00px;top:507.9px;letter-spacing:0.850px">Night Shift</div>
<div class="tg" style="top:499px"><i></i></div>
<div class="t" style="left:1745.00px;top:583.9px;letter-spacing:0.683px">Autohide Dock</div>
<div class="tg" style="top:575px"><i></i></div>
<div class="t" style="left:1745.00px;top:659.9px;letter-spacing:0.491px">Autohide Menu Bar</div>
<div class="tg" style="top:651px"><i></i></div>
<div class="t" style="left:1745.00px;top:735.9px;letter-spacing:0.750px">Bluetooth</div>
<div class="tg" style="top:727px"><i></i></div>
<div class="t" style="left:1745.00px;top:811.9px;letter-spacing:0.350px">Show Hidden Files</div>
<div class="tg" style="top:803px"><i></i></div>
<div class="t" style="left:1745.00px;top:887.9px;letter-spacing:0.041px">Radio Player</div>
<div class="t sec" style="left:1910.90px;top:887.9px;letter-spacing:0.467px">Country Radio</div>
<div class="tg" style="top:879px"><i></i></div>
<div style="position:absolute;left:1662px;top:987px;width:600px;height:90px;border-radius:17px;background:#f9e6fa;overflow:hidden">
<div style="position:absolute;left:410px;top:0;width:90px;height:90px;border-radius:19px;background:linear-gradient(180deg,#70f4d2 0%,#5cdcc8 45%,#44b6c8 100%)"></div>
<div style="position:absolute;left:510px;top:0;width:90px;height:90px;border-radius:19px;background:#74aef5;overflow:hidden">
<svg width="90" height="90" viewBox="2172 987 90 90" style="position:absolute;left:0;top:0">
<path d="M2205.200,1015 L2201,998" stroke="#8a94a8" stroke-width="1.8"/><path d="M2225.500,1015 L2229.800,998" stroke="#8a94a8" stroke-width="1.8"/>
<circle cx="2200.800" cy="997.500" r="2.600" fill="#a8b0c0"/><circle cx="2230" cy="997.500" r="2.600" fill="#a8b0c0"/>
<rect x="2188" y="1043" width="55" height="40" rx="4" fill="#8cc0f6"/>
<ellipse cx="2216.700" cy="1026.800" rx="23.700" ry="11.500" fill="#a9d2f8"/>
<circle cx="2205.500" cy="1026.500" r="1.900" fill="#4a5870"/><circle cx="2227.500" cy="1026.500" r="1.900" fill="#4a5870"/>
<rect x="2198" y="1042.400" width="37.500" height="36" fill="#d6e8fa"/>
<g fill="#6a8ab8" opacity="0.8"><rect x="2216.7" y="1047.0" width="2.2" height="2.2"/><rect x="2218.9" y="1047.0" width="2.2" height="2.2"/><rect x="2227.7" y="1047.0" width="2.2" height="2.2"/><rect x="2203.5" y="1049.2" width="2.2" height="2.2"/><rect x="2205.7" y="1049.2" width="2.2" height="2.2"/><rect x="2212.3" y="1049.2" width="2.2" height="2.2"/><rect x="2214.5" y="1049.2" width="2.2" height="2.2"/><rect x="2216.7" y="1049.2" width="2.2" height="2.2"/><rect x="2223.3" y="1049.2" width="2.2" height="2.2"/><rect x="2227.7" y="1049.2" width="2.2" height="2.2"/><rect x="2205.7" y="1051.4" width="2.2" height="2.2"/><rect x="2207.9" y="1051.4" width="2.2" height="2.2"/><rect x="2212.3" y="1051.4" width="2.2" height="2.2"/><rect x="2214.5" y="1051.4" width="2.2" height="2.2"/><rect x="2221.1" y="1051.4" width="2.2" height="2.2"/><rect x="2203.5" y="1053.6" width="2.2" height="2.2"/><rect x="2214.5" y="1053.6" width="2.2" height="2.2"/><rect x="2216.7" y="1053.6" width="2.2" height="2.2"/><rect x="2218.9" y="1053.6" width="2.2" height="2.2"/><rect x="2221.1" y="1053.6" width="2.2" height="2.2"/><rect x="2223.3" y="1053.6" width="2.2" height="2.2"/><rect x="2225.5" y="1053.6" width="2.2" height="2.2"/><rect x="2203.5" y="1055.8" width="2.2" height="2.2"/><rect x="2207.9" y="1055.8" width="2.2" height="2.2"/><rect x="2210.1" y="1055.8" width="2.2" height="2.2"/><rect x="2214.5" y="1055.8" width="2.2" height="2.2"/><rect x="2216.7" y="1055.8" width="2.2" height="2.2"/><rect x="2218.9" y="1055.8" width="2.2" height="2.2"/><rect x="2223.3" y="1055.8" width="2.2" height="2.2"/><rect x="2227.7" y="1055.8" width="2.2" height="2.2"/><rect x="2207.9" y="1058.0" width="2.2" height="2.2"/><rect x="2212.3" y="1058.0" width="2.2" height="2.2"/><rect x="2216.7" y="1058.0" width="2.2" height="2.2"/><rect x="2218.9" y="1058.0" width="2.2" height="2.2"/><rect x="2221.1" y="1058.0" width="2.2" height="2.2"/><rect x="2225.5" y="1058.0" width="2.2" height="2.2"/><rect x="2207.9" y="1060.2" width="2.2" height="2.2"/><rect x="2210.1" y="1060.2" width="2.2" height="2.2"/><rect x="2216.7" y="1060.2" width="2.2" height="2.2"/><rect x="2225.5" y="1060.2" width="2.2" height="2.2"/><rect x="2203.5" y="1062.4" width="2.2" height="2.2"/><rect x="2205.7" y="1062.4" width="2.2" height="2.2"/><rect x="2212.3" y="1062.4" width="2.2" height="2.2"/><rect x="2218.9" y="1062.4" width="2.2" height="2.2"/><rect x="2221.1" y="1062.4" width="2.2" height="2.2"/><rect x="2223.3" y="1062.4" width="2.2" height="2.2"/><rect x="2225.5" y="1062.4" width="2.2" height="2.2"/><rect x="2227.7" y="1062.4" width="2.2" height="2.2"/><rect x="2207.9" y="1064.6" width="2.2" height="2.2"/><rect x="2210.1" y="1064.6" width="2.2" height="2.2"/><rect x="2216.7" y="1064.6" width="2.2" height="2.2"/><rect x="2218.9" y="1064.6" width="2.2" height="2.2"/><rect x="2225.5" y="1064.6" width="2.2" height="2.2"/><rect x="2227.7" y="1064.6" width="2.2" height="2.2"/><rect x="2203.5" y="1066.8" width="2.2" height="2.2"/><rect x="2207.9" y="1066.8" width="2.2" height="2.2"/><rect x="2210.1" y="1066.8" width="2.2" height="2.2"/><rect x="2214.5" y="1066.8" width="2.2" height="2.2"/><rect x="2225.5" y="1066.8" width="2.2" height="2.2"/><rect x="2227.7" y="1066.8" width="2.2" height="2.2"/><rect x="2203.5" y="1069.0" width="2.2" height="2.2"/><rect x="2207.9" y="1069.0" width="2.2" height="2.2"/><rect x="2210.1" y="1069.0" width="2.2" height="2.2"/><rect x="2218.9" y="1069.0" width="2.2" height="2.2"/><rect x="2221.1" y="1069.0" width="2.2" height="2.2"/><rect x="2225.5" y="1069.0" width="2.2" height="2.2"/><rect x="2227.7" y="1069.0" width="2.2" height="2.2"/><rect x="2203.5" y="1071.2" width="2.2" height="2.2"/><rect x="2205.7" y="1071.2" width="2.2" height="2.2"/><rect x="2207.9" y="1071.2" width="2.2" height="2.2"/><rect x="2216.7" y="1071.2" width="2.2" height="2.2"/><rect x="2218.9" y="1071.2" width="2.2" height="2.2"/><rect x="2221.1" y="1071.2" width="2.2" height="2.2"/><rect x="2223.3" y="1071.2" width="2.2" height="2.2"/></g>
<rect x="2189" y="1074.300" width="9" height="3" fill="#f0907a"/><rect x="2235.500" y="1074.300" width="9" height="3" fill="#f0907a"/>
</svg></div>
</div>
<div class="t" style="font-weight:bold;font-size:28px;color:#6b5b72;left:1682.90px;top:1017.2px;letter-spacing:0.347px;line-height:34px;height:34px">More Apps by Jack</div>
<div class="t" style="font-weight:bold;font-size:88px;color:#4a8ee8;left:2092px;top:979.500px;line-height:100px;height:100px;transform:scale(0.93,1);transform-origin:0 0">?</div>
<div class="t" style="font-weight:bold;font-size:26px;left:1842.40px;top:1115.5px;letter-spacing:0.445px">Only Switch</div>
<div class="t" style="left:2013.80px;top:1115.5px;letter-spacing:-0.510px">v2.3.1</div>
</div>
<style>
#dock{position:absolute;left:83px;top:1424.5px;width:2152.500px;height:121px;border-radius:23px;box-sizing:border-box;
background:linear-gradient(90deg,#63579a 0%,#65589f 25%,#6c58b8 34%,#7259c6 42%,#7a59cf 50%,#9258e2 58%,#a65cf2 66%,#a65cf2 74%,#9459ec 83%,#8558e4 92%,#7d58de 100%);
border:1.500px solid rgba(255,255,255,0.22);box-shadow:0 0 0 0.500px rgba(0,0,0,0.25)}
.di{position:absolute;overflow:visible;filter:drop-shadow(0 1.500px 2.500px rgba(0,0,0,0.3))}
</style><div id="dock"></div>
<svg class="di" style="left:100px;top:1442px" width="76" height="76" viewBox="0 0 76 76"><defs><linearGradient id="fb" x1="0" y1="0" x2="0" y2="1"><stop offset="0" stop-color="#22c0fc"/><stop offset="1" stop-color="#1b62ee"/></linearGradient>
<linearGradient id="fw" x1="0" y1="0" x2="0" y2="1"><stop offset="0" stop-color="#f2f6fa"/><stop offset="1" stop-color="#d4dce6"/></linearGradient>
<clipPath id="fc"><rect x="1" y="1" width="74" height="74" rx="17"/></clipPath></defs>
<g clip-path="url(#fc)"><rect x="0" y="0" width="76" height="76" fill="url(#fb)"/>
<path d="M43,0 C36,12 32.500,26 32,42 H40.500 C40,54 41.500,66 45,77 H77 V0 Z" fill="url(#fw)"/>
<path d="M43,0 C36,12 32.500,26 32,42 H40.500 C40,54 41.500,66 45,77" fill="none" stroke="#1d3f7a" stroke-width="1.400" opacity="0.55"/>
</g>
<path d="M20,22 v6.500" stroke="#1c2c4c" stroke-width="2.800" stroke-linecap="round"/><path d="M55,22 v6.500" stroke="#1c2c4c" stroke-width="2.800" stroke-linecap="round"/>
<path d="M15,50 C27,62 49,62 60.500,50" fill="none" stroke="#1c2c4c" stroke-width="2.600" stroke-linecap="round"/></svg>
<svg class="di" style="left:200px;top:1442px" width="76" height="76" viewBox="0 0 76 76"><defs><linearGradient id="lp" x1="0" y1="0" x2="0" y2="1"><stop offset="0" stop-color="#e2dcea"/><stop offset="1" stop-color="#cfc6da"/></linearGradient></defs><rect x="1" y="1" width="74" height="74" rx="17" fill="url(#lp)" /><rect x="13.5" y="13.8" width="13" height="13" rx="3.600" fill="#3ad24a"/><rect x="31.7" y="13.8" width="13" height="13" rx="3.600" fill="#fdb614"/><rect x="49.9" y="13.8" width="13" height="13" rx="3.600" fill="#fb8c10"/><rect x="13.5" y="32.0" width="13" height="13" rx="3.600" fill="#f5281c"/><rect x="31.7" y="32.0" width="13" height="13" rx="3.600" fill="#a8b0b4"/><rect x="49.9" y="32.0" width="13" height="13" rx="3.600" fill="#fc3864"/><rect x="13.5" y="50.2" width="13" height="13" rx="3.600" fill="#b452e8"/><rect x="31.7" y="50.2" width="13" height="13" rx="3.600" fill="#2aa6fa"/><rect x="49.9" y="50.2" width="13" height="13" rx="3.600" fill="#2ecfa4"/></svg>
<svg class="di" style="left:300px;top:1442px" width="76" height="76" viewBox="0 0 76 76"><defs><linearGradient id="sf" x1="0" y1="0" x2="0" y2="1"><stop offset="0" stop-color="#ffffff"/><stop offset="1" stop-color="#e2e2e6"/></linearGradient><linearGradient id="sb" x1="0" y1="0" x2="0" y2="1"><stop offset="0" stop-color="#23b0f6"/><stop offset="1" stop-color="#1a72e8"/></linearGradient></defs><rect x="1" y="1" width="74" height="74" rx="17" fill="url(#sf)" /><circle cx="38" cy="38" r="31" fill="url(#sb)"/><path d="M64.50,38.00 L68.00,38.00 M65.89,40.44 L67.89,40.61 M64.10,42.60 L67.54,43.21 M65.05,45.25 L66.98,45.76 M62.90,47.06 L66.19,48.26 M63.38,49.83 L65.19,50.68 M60.95,51.25 L63.98,53.00 M60.94,54.06 L62.57,55.21 M58.30,55.03 L60.98,57.28 M57.80,57.80 L59.21,59.21 M55.03,58.30 L57.28,60.98 M54.06,60.94 L55.21,62.57 M51.25,60.95 L53.00,63.98 M49.83,63.38 L50.68,65.19 M47.06,62.90 L48.26,66.19 M45.25,65.05 L45.76,66.98 M42.60,64.10 L43.21,67.54 M40.44,65.89 L40.61,67.89 M38.00,64.50 L38.00,68.00 M35.56,65.89 L35.39,67.89 M33.40,64.10 L32.79,67.54 M30.75,65.05 L30.24,66.98 M28.94,62.90 L27.74,66.19 M26.17,63.38 L25.32,65.19 M24.75,60.95 L23.00,63.98 M21.94,60.94 L20.79,62.57 M20.97,58.30 L18.72,60.98 M18.20,57.80 L16.79,59.21 M17.70,55.03 L15.02,57.28 M15.06,54.06 L13.43,55.21 M15.05,51.25 L12.02,53.00 M12.62,49.83 L10.81,50.68 M13.10,47.06 L9.81,48.26 M10.95,45.25 L9.02,45.76 M11.90,42.60 L8.46,43.21 M10.11,40.44 L8.11,40.61 M11.50,38.00 L8.00,38.00 M10.11,35.56 L8.11,35.39 M11.90,33.40 L8.46,32.79 M10.95,30.75 L9.02,30.24 M13.10,28.94 L9.81,27.74 M12.62,26.17 L10.81,25.32 M15.05,24.75 L12.02,23.00 M15.06,21.94 L13.43,20.79 M17.70,20.97 L15.02,18.72 M18.20,18.20 L16.79,16.79 M20.97,17.70 L18.72,15.02 M21.94,15.06 L20.79,13.43 M24.75,15.05 L23.00,12.02 M26.17,12.62 L25.32,10.81 M28.94,13.10 L27.74,9.81 M30.75,10.95 L30.24,9.02 M33.40,11.90 L32.79,8.46 M35.56,10.11 L35.39,8.11 M38.00,11.50 L38.00,8.00 M40.44,10.11 L40.61,8.11 M42.60,11.90 L43.21,8.46 M45.25,10.95 L45.76,9.02 M47.06,13.10 L48.26,9.81 M49.83,12.62 L50.68,10.81 M51.25,15.05 L53.00,12.02 M54.06,15.06 L55.21,13.43 M55.03,17.70 L57.28,15.02 M57.80,18.20 L59.21,16.79 M58.30,20.97 L60.98,18.72 M60.94,21.94 L62.57,20.79 M60.95,24.75 L63.98,23.00 M63.38,26.17 L65.19,25.32 M62.90,28.94 L66.19,27.74 M65.05,30.75 L66.98,30.24 M64.10,33.40 L67.54,32.79 M65.89,35.56 L67.89,35.39 " stroke="#ffffff" stroke-width="0.700" opacity="0.85"/><path d="M61,15 L34.800,34.800 L41.200,41.200 Z" fill="#f5443a"/><path d="M15,61 L34.800,34.800 L41.200,41.200 Z" fill="#f2f2f4"/></svg>
<svg class="di" style="left:400px;top:1442px" width="76" height="76" viewBox="0 0 76 76"><defs><linearGradient id="mg" x1="0" y1="0" x2="0" y2="1"><stop offset="0" stop-color="#5ef078"/><stop offset="1" stop-color="#0fbf2c"/></linearGradient>
<linearGradient id="mw" x1="0" y1="0" x2="0" y2="1"><stop offset="0" stop-color="#ffffff"/><stop offset="1" stop-color="#d8ecd8"/></linearGradient></defs><rect x="1" y="1" width="74" height="74" rx="17" fill="url(#mg)" />
<path d="M38,14.500 C52.500,14.500 64,23.800 64,35.500 C64,47.200 52.500,56.500 38,56.500 C35.200,56.500 32.500,56.200 30,55.500 C27.500,58 23.500,60.200 20,60.800 C22,58.500 23.200,55.500 23,52.800 C16.200,49 12,42.700 12,35.500 C12,23.800 23.500,14.500 38,14.500 Z" fill="url(#mw)"/></svg>
<svg class="di" style="left:500px;top:1442px" width="76" height="76" viewBox="0 0 76 76"><defs><linearGradient id="ml" x1="0" y1="0" x2="0" y2="1"><stop offset="0" stop-color="#1e6ff0"/><stop offset="1" stop-color="#21b8fa"/></linearGradient>
<linearGradient id="me" x1="0" y1="0" x2="0" y2="1"><stop offset="0" stop-color="#ffffff"/><stop offset="1" stop-color="#dde0e6"/></linearGradient></defs><rect x="1" y="1" width="74" height="74" rx="17" fill="url(#ml)" />
<rect x="12.500" y="22" width="51" height="32.500" rx="4" fill="url(#me)"/>
<path d="M13.500,24 L35,43 Q38,45.500 41,43 L62.500,24" fill="none" stroke="#b8bcc6" stroke-width="1.600"/>
<path d="M13.500,53 L30,38.500 M62.500,53 L46,38.500" fill="none" stroke="#c8ccd4" stroke-width="1.300"/></svg>
<svg class="di" style="left:600px;top:1442px" width="76" height="76" viewBox="0 0 76 76"><defs><clipPath id="mpc"><rect x="1" y="1" width="74" height="74" rx="17"/></clipPath></defs>
<g clip-path="url(#mpc)"><rect x="0" y="0" width="76" height="76" fill="#60d46c"/>
<path d="M0,34 L30,48 L30,76 L0,76 Z" fill="#f4a0c8"/>
<path d="M42,50 L76,62 L76,76 L42,76 Z" fill="#f8d030"/>
<path d="M0,28 L76,58 L76,66 L0,36 Z" fill="#f0f0ea"/>
<path d="M46,0 Q44,20 76,26 V14 Q58,12 56,0 Z" fill="#e8e8e8"/>
<path d="M50,0 Q50,16 76,21 V18 Q54,14 53,0 Z" fill="#b4b8c0"/>
<rect x="22" y="0" width="17" height="76" fill="#f4f4f0"/>
<rect x="25.500" y="0" width="10" height="46" fill="#2a8af4"/>
<circle cx="30.500" cy="46.500" r="17.500" fill="#f4f6fa"/><circle cx="30.500" cy="46.500" r="14.300" fill="#2486f2"/>
<path d="M30.500,36 L38,55 L30.500,51 L23,55 Z" fill="#ffffff"/></g></svg>
<svg class="di" style="left:700px;top:1442px" width="76" height="76" viewBox="0 0 76 76"><rect x="1" y="1" width="74" height="74" rx="17" fill="#ffffff" /><ellipse cx="38" cy="22.500" rx="9.200" ry="15.500" fill="#fb9c14" opacity="0.82" transform="rotate(0 38 38)"/><ellipse cx="38" cy="22.500" rx="9.200" ry="15.500" fill="#f4d422" opacity="0.82" transform="rotate(45 38 38)"/><ellipse cx="38" cy="22.500" rx="9.200" ry="15.500" fill="#9fd03a" opacity="0.82" transform="rotate(90 38 38)"/><ellipse cx="38" cy="22.500" rx="9.200" ry="15.500" fill="#4ac08c" opacity="0.82" transform="rotate(135 38 38)"/><ellipse cx="38" cy="22.500" rx="9.200" ry="15.500" fill="#48a6ea" opacity="0.82" transform="rotate(180 38 38)"/><ellipse cx="38" cy="22.500" rx="9.200" ry="15.500" fill="#7d78d8" opacity="0.82" transform="rotate(225 38 38)"/><ellipse cx="38" cy="22.500" rx="9.200" ry="15.500" fill="#c06ad0" opacity="0.82" transform="rotate(270 38 38)"/><ellipse cx="38" cy="22.500" rx="9.200" ry="15.500" fill="#f2545e" opacity="0.82" transform="rotate(315 38 38)"/></svg>
<svg class="di" style="left:798px;top:1442px" width="76" height="76" viewBox="0 0 76 76"><defs><linearGradient id="ft" x1="0" y1="0" x2="0" y2="1"><stop offset="0" stop-color="#5df078"/><stop offset="1" stop-color="#0dbd2a"/></linearGradient>
<linearGradient id="fw2" x1="0" y1="0" x2="0" y2="1"><stop offset="0" stop-color="#ffffff"/><stop offset="1" stop-color="#cfe6d0"/></linearGradient></defs><rect x="1" y="1" width="74" height="74" rx="17" fill="url(#ft)" />
<rect x="11.500" y="23.500" width="36" height="30" rx="8" fill="url(#fw2)"/>
<path d="M50.500,34.500 L61,25.500 Q63.500,24 63.500,27 V50 Q63.500,53 61,51.500 L50.500,42.500 Z" fill="url(#fw2)"/></svg>
<svg class="di" style="left:898px;top:1442px" width="76" height="76" viewBox="0 0 76 76"><defs><clipPath id="cc"><rect x="1" y="1" width="74" height="74" rx="17"/></clipPath><linearGradient id="cw" x1="0" y1="0" x2="0" y2="1"><stop offset="0" stop-color="#ffffff"/><stop offset="1" stop-color="#eeeeee"/></linearGradient></defs>
<g clip-path="url(#cc)"><rect x="0" y="0" width="76" height="76" fill="url(#cw)"/><rect x="0" y="0" width="76" height="23.500" fill="#f4524c"/></g>
<text x="38" y="19" text-anchor="middle" font-family="Liberation Sans, sans-serif" font-weight="bold" font-size="14.500" fill="#ffffff">JUN</text>
<text x="38" y="63.500" text-anchor="middle" font-family="Liberation Sans, sans-serif" font-size="43" fill="#1c1c1e">2</text></svg>
<svg class="di" style="left:998px;top:1442px" width="76" height="76" viewBox="0 0 76 76"><rect x="66" y="12" width="9" height="14" rx="3" fill="#b8b8bc"/><rect x="66" y="27" width="9" height="14" rx="3" fill="#5ab4f0"/><rect x="66" y="42" width="9" height="11" rx="3" fill="#f09030"/><rect x="66" y="54" width="9" height="11" rx="3" fill="#5cc858"/>
<defs><linearGradient id="cb" x1="0" y1="0" x2="0" y2="1"><stop offset="0" stop-color="#bd9054"/><stop offset="1" stop-color="#a67c44"/></linearGradient></defs>
<rect x="1" y="1" width="71" height="74" rx="15" fill="url(#cb)"/>
<rect x="1" y="1" width="8" height="74" rx="4" fill="#94703c" opacity="0.5"/>
<circle cx="39" cy="38" r="22" fill="none" stroke="#8c6a3a" stroke-width="1.500"/>
<circle cx="39" cy="31" r="7.500" fill="#97723e"/><path d="M24.500,53 Q28,42.500 39,42.500 Q50,42.500 53.500,53 Q47,59.500 39,59.500 Q31,59.500 24.500,53 Z" fill="#97723e"/></svg>
<svg class="di" style="left:1098px;top:1442px" width="76" height="76" viewBox="0 0 76 76"><rect x="1" y="1" width="74" height="74" rx="17" fill="#ffffff" />
<circle cx="15.500" cy="19.500" r="5.200" fill="#ffffff" stroke="#2a7af0" stroke-width="1.200"/><circle cx="15.500" cy="19.500" r="3.300" fill="#2a7af0"/>
<circle cx="15.500" cy="38" r="5.200" fill="#ffffff" stroke="#f03a34" stroke-width="1.200"/><circle cx="15.500" cy="38" r="3.300" fill="#f03a34"/>
<circle cx="15.500" cy="56.500" r="5.200" fill="#ffffff" stroke="#f49a14" stroke-width="1.200"/><circle cx="15.500" cy="56.500" r="3.300" fill="#f49a14"/>
<path d="M28.500,19.500 H66.500 M28.500,38 H66.500 M28.500,56.500 H66.500" stroke="#c4c4c8" stroke-width="1.300"/></svg>
<svg class="di" style="left:1198px;top:1442px" width="76" height="76" viewBox="0 0 76 76"><defs><clipPath id="nc"><rect x="1" y="1" width="74" height="74" rx="17"/></clipPath><linearGradient id="nw" x1="0" y1="0" x2="0" y2="1"><stop offset="0" stop-color="#fbfbf8"/><stop offset="1" stop-color="#e8e6e0"/></linearGradient>
<linearGradient id="ny" x1="0" y1="0" x2="0" y2="1"><stop offset="0" stop-color="#fedc4a"/><stop offset="1" stop-color="#fbc612"/></linearGradient></defs>
<g clip-path="url(#nc)"><rect x="0" y="0" width="76" height="76" fill="url(#nw)"/><rect x="0" y="0" width="76" height="20" fill="url(#ny)"/>
<path d="M0,23.500 H76" stroke="#b8b6ae" stroke-width="1.200" stroke-dasharray="1.200 1.200"/>
<path d="M0,38.500 H76 M0,55.500 H76" stroke="#d6d4cc" stroke-width="1"/></g></svg>
<svg class="di" style="left:1298px;top:1442px" width="76" height="76" viewBox="0 0 76 76"><defs><linearGradient id="tvb" x1="0" y1="0" x2="0" y2="1"><stop offset="0" stop-color="#2e3638"/><stop offset="1" stop-color="#0c0e10"/></linearGradient></defs><rect x="1" y="1" width="74" height="74" rx="17" fill="url(#tvb)" />
<g transform="translate(8.500,22.500) scale(0.78)"><path fill="#ffffff" d="M20.300,1.200 C20.500,3.100 19.800,4.900 18.700,6.200 C17.600,7.600 15.800,8.600 14.100,8.500 C13.900,6.700 14.700,4.800 15.700,3.600 C16.900,2.200 18.800,1.300 20.300,1.200 Z M26.300,12.600 C26,12.800 23.000,14.500 23.000,18.300 C23.100,22.800 26.900,24.300 27,24.300 C26.900,24.400 26.400,26.400 25.000,28.400 C23.800,30.200 22.600,32.000 20.600,32.000 C18.700,32.100 18.100,30.900 15.900,30.900 C13.700,30.900 13.000,32.000 11.200,32.100 C9.300,32.200 7.900,30.200 6.700,28.400 C4.200,24.800 2.300,18.200 4.900,13.800 C6.100,11.600 8.400,10.200 10.800,10.200 C12.700,10.100 14.400,11.400 15.600,11.400 C16.700,11.400 18.800,9.900 21.100,10.100 C22.000,10.100 24.700,10.500 26.300,12.600 Z"/></g>
<text x="33" y="48" font-family="Liberation Sans, sans-serif" font-weight="bold" font-size="27" fill="#ffffff" letter-spacing="-0.5">tv</text></svg>
<svg class="di" style="left:1398px;top:1442px" width="76" height="76" viewBox="0 0 76 76"><defs><linearGradient id="mu" x1="0" y1="0" x2="0" y2="1"><stop offset="0" stop-color="#fb5c74"/><stop offset="1" stop-color="#fa233b"/></linearGradient></defs><rect x="1" y="1" width="74" height="74" rx="17" fill="url(#mu)" />
<path d="M30,22 L55,16 V48.500 A6.500,5.500 0 1 1 50.500,43.300 V27 L34.500,30.800 V53 A6.500,5.500 0 1 1 30,47.800 Z" fill="#ffffff"/></svg>
<svg class="di" style="left:1498px;top:1442px" width="76" height="76" viewBox="0 0 76 76"><defs><linearGradient id="pc" x1="0" y1="0" x2="0" y2="1"><stop offset="0" stop-color="#d873f0"/><stop offset="1" stop-color="#832bc1"/></linearGradient></defs><rect x="1" y="1" width="74" height="74" rx="17" fill="url(#pc)" />
<path d="M22,54 A24,24 0 1 1 54,54" fill="none" stroke="#ffffff" stroke-width="3.500" stroke-linecap="round"/>
<path d="M28,45.500 A14,14 0 1 1 48,45.500" fill="none" stroke="#ffffff" stroke-width="3.500" stroke-linecap="round"/>
<circle cx="38" cy="35" r="6" fill="#ffffff"/>
<path d="M33,48 Q33,44 38,44 Q43,44 43,48 L41.500,63 Q41,66 38,66 Q35,66 34.500,63 Z" fill="#ffffff"/></svg>
<svg class="di" style="left:1598px;top:1442px" width="76" height="76" viewBox="0 0 76 76"><defs><linearGradient id="as" x1="0" y1="0" x2="0" y2="1"><stop offset="0" stop-color="#1cb4f8"/><stop offset="1" stop-color="#1a6cf0"/></linearGradient></defs><rect x="1" y="1" width="74" height="74" rx="17" fill="url(#as)" />
<g stroke="#ffffff" stroke-width="5.600" stroke-linecap="round" fill="none">
<path d="M41.500,17.500 L22,52"/><path d="M34.500,17.500 L55,54"/><path d="M13.500,46.500 H40"/><path d="M48,46.500 H62.500"/><path d="M19.500,57 L17.500,60.500"/></g></svg>
<svg class="di" style="left:1698px;top:1442px" width="76" height="76" viewBox="0 0 76 76"><defs><linearGradient id="sp" x1="0" y1="0" x2="0" y2="1"><stop offset="0" stop-color="#dfe0e2"/><stop offset="1" stop-color="#9a9a9e"/></linearGradient>
<linearGradient id="sp2" x1="0" y1="0" x2="0" y2="1"><stop offset="0" stop-color="#8e8f92"/><stop offset="1" stop-color="#5e5f62"/></linearGradient></defs><rect x="1" y="1" width="74" height="74" rx="17" fill="url(#sp)" />
<circle cx="38" cy="38" r="33" fill="#4a4b4e"/><path d="M65.47,36.76 L68.49,37.09 L68.49,38.91 L65.47,39.24 L65.33,41.08 L68.25,41.87 L67.97,43.67 L64.94,43.52 L64.51,45.31 L67.28,46.55 L66.71,48.29 L63.75,47.67 L63.04,49.37 L65.58,51.03 L64.75,52.66 L61.92,51.57 L60.95,53.15 L63.20,55.18 L62.13,56.66 L59.50,55.15 L58.30,56.55 L60.20,58.91 L58.91,60.20 L56.55,58.30 L55.15,59.50 L56.66,62.13 L55.18,63.20 L53.15,60.95 L51.57,61.92 L52.66,64.75 L51.03,65.58 L49.37,63.04 L47.67,63.75 L48.29,66.71 L46.55,67.28 L45.31,64.51 L43.52,64.94 L43.67,67.97 L41.87,68.25 L41.08,65.33 L39.24,65.47 L38.91,68.49 L37.09,68.49 L36.76,65.47 L34.92,65.33 L34.13,68.25 L32.33,67.97 L32.48,64.94 L30.69,64.51 L29.45,67.28 L27.71,66.71 L28.33,63.75 L26.63,63.04 L24.97,65.58 L23.34,64.75 L24.43,61.92 L22.85,60.95 L20.82,63.20 L19.34,62.13 L20.85,59.50 L19.45,58.30 L17.09,60.20 L15.80,58.91 L17.70,56.55 L16.50,55.15 L13.87,56.66 L12.80,55.18 L15.05,53.15 L14.08,51.57 L11.25,52.66 L10.42,51.03 L12.96,49.37 L12.25,47.67 L9.29,48.29 L8.72,46.55 L11.49,45.31 L11.06,43.52 L8.03,43.67 L7.75,41.87 L10.67,41.08 L10.53,39.24 L7.51,38.91 L7.51,37.09 L10.53,36.76 L10.67,34.92 L7.75,34.13 L8.03,32.33 L11.06,32.48 L11.49,30.69 L8.72,29.45 L9.29,27.71 L12.25,28.33 L12.96,26.63 L10.42,24.97 L11.25,23.34 L14.08,24.43 L15.05,22.85 L12.80,20.82 L13.87,19.34 L16.50,20.85 L17.70,19.45 L15.80,17.09 L17.09,15.80 L19.45,17.70 L20.85,16.50 L19.34,13.87 L20.82,12.80 L22.85,15.05 L24.43,14.08 L23.34,11.25 L24.97,10.42 L26.63,12.96 L28.33,12.25 L27.71,9.29 L29.45,8.72 L30.69,11.49 L32.48,11.06 L32.33,8.03 L34.13,7.75 L34.92,10.67 L36.76,10.53 L37.09,7.51 L38.91,7.51 L39.24,10.53 L41.08,10.67 L41.87,7.75 L43.67,8.03 L43.52,11.06 L45.31,11.49 L46.55,8.72 L48.29,9.29 L47.67,12.25 L49.37,12.96 L51.03,10.42 L52.66,11.25 L51.57,14.08 L53.15,15.05 L55.18,12.80 L56.66,13.87 L55.15,16.50 L56.55,17.70 L58.91,15.80 L60.20,17.09 L58.30,19.45 L59.50,20.85 L62.13,19.34 L63.20,20.82 L60.95,22.85 L61.92,24.43 L64.75,23.34 L65.58,24.97 L63.04,26.63 L63.75,28.33 L66.71,27.71 L67.28,29.45 L64.51,30.69 L64.94,32.48 L67.97,32.33 L68.25,34.13 L65.33,34.92 Z" fill="url(#sp2)"/>
<circle cx="38" cy="38" r="25.500" fill="#4c4d50"/><circle cx="38" cy="38" r="23" fill="#77787b"/>
<circle cx="38" cy="38" r="19" fill="#5a5b5e"/>
<g stroke="#97989b" stroke-width="4.400" stroke-linecap="round"><path d="M38,38 L38,18.500"/><path d="M38,38 L21,47.800"/><path d="M38,38 L55,47.800"/></g>
<circle cx="38" cy="38" r="19.500" fill="none" stroke="#8d8e91" stroke-width="3"/>
<circle cx="38" cy="38" r="4" fill="#a4a5a8"/></svg>
<svg class="di" style="left:1793px;top:1437px" width="86" height="86" viewBox="0 0 86 86"><defs><clipPath id="mtc"><circle cx="43" cy="43" r="38.500"/></clipPath></defs>
<circle cx="43" cy="43" r="42" fill="#ffffff"/><circle cx="43" cy="43" r="38.500" fill="#4aa6e0"/>
<g clip-path="url(#mtc)"><rect x="0" y="59" width="86" height="30" fill="#4d8fd0"/>
<path d="M10,54.500 L26,29 L35,43.500 L50,15 L75,54.500" fill="none" stroke="#ffffff" stroke-width="4.200" stroke-linejoin="miter"/>
<path d="M0,56.500 H86" stroke="#ffffff" stroke-width="4.200"/></g></svg>
<svg class="di" style="left:1898px;top:1442px" width="76" height="76" viewBox="0 0 76 76"><rect x="1" y="1" width="74" height="74" rx="17" fill="#a8a4b4"/><rect x="3.200" y="3.200" width="69.600" height="69.600" rx="15" fill="#080808"/>
<rect x="6.500" y="6.500" width="63" height="63" rx="11" fill="#242426"/>
<text x="13" y="27.500" font-family="Liberation Mono, monospace" font-weight="bold" font-size="17" fill="#ffffff">&gt;_</text></svg>
<div style="position:absolute;left:2008px;top:1440px;width:1.500px;height:90px;background:rgba(60,10,120,0.65)"></div>
<svg class="di" style="left:2036px;top:1441px" width="87" height="78" viewBox="0 0 87 78"><defs><linearGradient id="dl" x1="0" y1="0" x2="0" y2="1"><stop offset="0" stop-color="#7fd4fc"/><stop offset="1" stop-color="#62c2f6"/></linearGradient></defs>
<path d="M2,9 Q2,4 7,4 H27 Q31,4 34,8 L36,11 H80 Q85,11 85,16 V30 H2 Z" fill="#3aa4e4"/>
<rect x="2" y="16.500" width="83" height="56.500" rx="5" fill="url(#dl)"/>
<path d="M2,69 H85" stroke="#48aee8" stroke-width="1.500" opacity="0.7"/>
<circle cx="43.500" cy="44" r="16.500" fill="#41a8e6"/>
<path d="M43.500,35 V52 M36.500,45.500 L43.500,52.500 L50.500,45.500" fill="none" stroke="#7fd0fa" stroke-width="2.600" stroke-linecap="round" stroke-linejoin="round"/></svg>
<svg class="di" style="left:2148px;top:1439px" width="66" height="84" viewBox="0 0 66 84"><defs><linearGradient id="tr" x1="0" y1="0" x2="1" y2="0"><stop offset="0" stop-color="#f4f4f8" stop-opacity="0.95"/><stop offset="0.5" stop-color="#dcdce4" stop-opacity="0.85"/><stop offset="1" stop-color="#f0f0f6" stop-opacity="0.95"/></linearGradient></defs>
<path d="M1,9 L11,74 Q12,81 33,81 Q54,81 55,74 L65,9 Z" fill="url(#tr)"/>
<ellipse cx="33" cy="9" rx="32" ry="8.500" fill="#cdbfe0"/><ellipse cx="33" cy="9" rx="32" ry="8.500" fill="none" stroke="#f4f2f8" stroke-width="2"/></svg>
<div style="position:absolute;left:134px;top:1534px;width:8px;height:8px;border-radius:4px;background:#0a0a14"></div>
<div style="position:absolute;left:334px;top:1534px;width:8px;height:8px;border-radius:4px;background:#0a0a14"></div>
</body></html>
